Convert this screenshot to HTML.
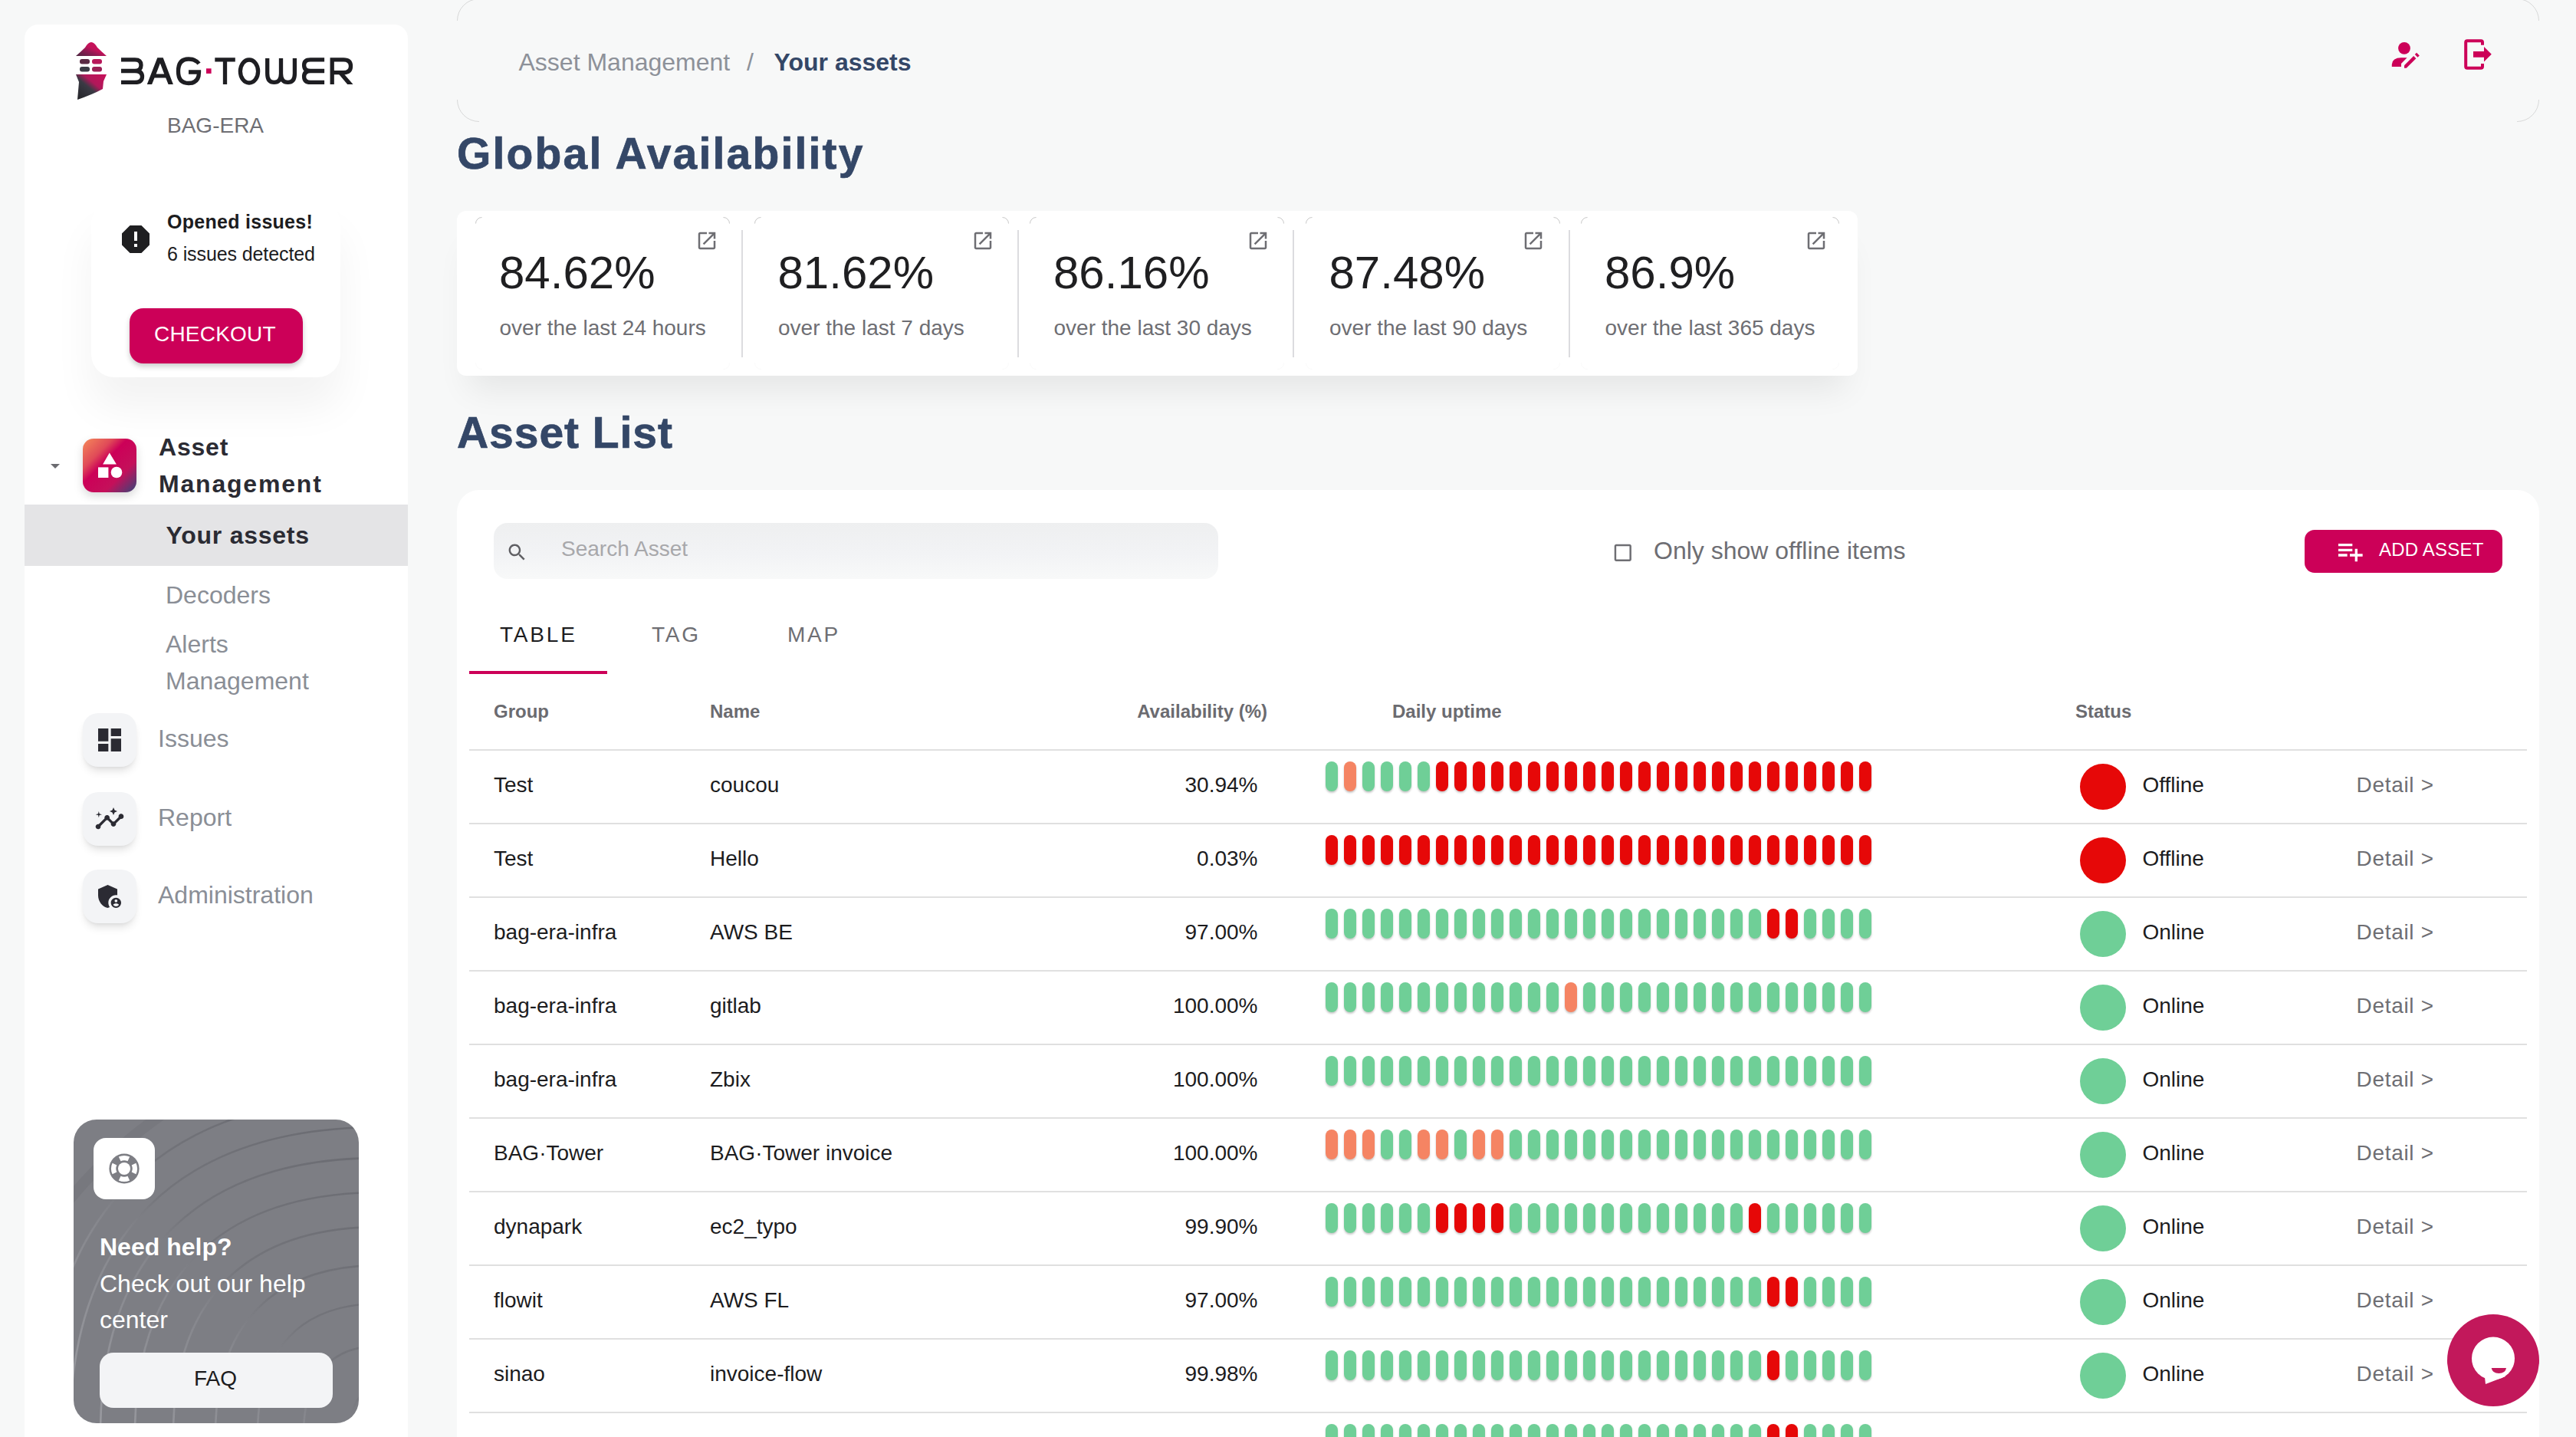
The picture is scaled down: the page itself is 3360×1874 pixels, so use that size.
<!DOCTYPE html><html><head><meta charset="utf-8"><style>
html,body{margin:0;padding:0;}
body{width:3360px;height:1874px;overflow:hidden;position:relative;background:#f7f8f8;font-family:"Liberation Sans", sans-serif;}
.t{position:absolute;white-space:nowrap;line-height:1;font-family:"Liberation Sans", sans-serif;}
@media (max-width: 2000px) { html { zoom: 0.5; } }
</style></head><body>
<div style="position:absolute;left:32px;top:32px;width:500px;height:1900px;background:#fff;border-radius:18px;"></div>
<svg style="position:absolute;left:96px;top:52px;" width="46" height="82" viewBox="0 0 46 82">
<defs><linearGradient id="tg" x1="0" y1="1" x2="1" y2="0"><stop offset="0" stop-color="#222226"/><stop offset="0.45" stop-color="#3a3a44"/><stop offset="0.62" stop-color="#b0185a"/><stop offset="1" stop-color="#c8105a"/></linearGradient>
<linearGradient id="rg" x1="0" y1="1" x2="1" y2="0"><stop offset="0" stop-color="#4a2840"/><stop offset="0.35" stop-color="#8e1a52"/><stop offset="0.55" stop-color="#c4125a"/><stop offset="1" stop-color="#c8105a"/></linearGradient></defs>
<path d="M3 21 Q 10 15 15 10 Q 19 3 23 3 Q 27 3 31 10 Q 36 15 43 21 Z" fill="url(#rg)"/>
<rect x="8" y="25" width="13" height="6.5" rx="3" fill="#5a2a44"/>
<rect x="24" y="25" width="13" height="6.5" rx="3" fill="#b8185a"/>
<rect x="8" y="35" width="13" height="6.5" rx="3" fill="#3a3a44"/>
<rect x="24" y="35" width="13" height="6.5" rx="3" fill="#9a1f55"/>
<path d="M3 45 L43 45 L39 54 L38 64 Q 25 71 5 78 L7 55 Z" fill="url(#tg)"/>
</svg>
<svg style="position:absolute;left:0px;top:0px;" width="480" height="130" viewBox="0 0 480 130">
<g fill="none" stroke="#1e1e22" stroke-width="5.3" stroke-linecap="butt" stroke-linejoin="miter">
<path d="M158 77.9 H176 Q 184 77.9 184 85 Q 184 92.5 176 92.5 H158 M176 92.5 Q 185.5 92.5 185.5 100 Q 185.5 107.4 176 107.4 H158"/>

<path d="M259.5 83 Q 255 77 246 77 Q 232.5 77 232.5 93 Q 232.5 108.5 246 108.5 Q 259.5 108.5 259.5 94 H246"/>
<path d="M280.3 77.9 H306.8 M293.5 77.9 V110"/>
<ellipse cx="325" cy="93" rx="11.6" ry="15"/>
<path d="M348.7 76 V96 Q 348.7 107.4 357.5 107.4 Q 366.5 107.4 366.5 96 V76 M366.5 96 Q 366.5 107.4 375.5 107.4 Q 384.4 107.4 384.4 96 V76"/>
<path d="M423.1 77.9 H405 Q 396.6 77.9 396.6 85 Q 396.6 92.5 405 92.5 H423.1 M405 92.5 Q 396.6 92.5 396.6 100 Q 396.6 107.4 405 107.4 H423.1"/>
<path d="M433.2 110 V77.9 H448 Q 457.5 77.9 457.5 86.3 Q 457.5 94.7 448 94.7 H433.2"/>
</g>
<rect x="269" y="89.3" width="6.6" height="6.6" fill="#cc0058"/>
<path fill-rule="evenodd" fill="#1e1e22" d="M191.8 110 L205.3 75.2 L212.7 75.2 L225.9 110 L219.6 110 L216.2 101.5 L201.5 101.5 L198.1 110 Z M203.6 96.4 L214.2 96.4 L208.9 82.5 Z"/>
<path fill="#1e1e22" d="M440.5 95 L447.5 95 L460.5 110 L453.2 110 Z"/>
</svg>
<div class="t" style="left:218.0px;top:150.3px;font-size:28px;font-weight:400;color:#6e6e73;letter-spacing:0px;">BAG-ERA</div>
<div style="position:absolute;left:119px;top:262px;width:325px;height:230px;background:#fff;border-radius:30px;box-shadow:0 40px 54px rgba(0,0,0,0.05);"></div>
<svg style="position:absolute;left:153px;top:288px;" width="48" height="48" viewBox="0 0 24 24"><path fill="#1f1f21" d="M15.73 3H8.27L3 8.27v7.46L8.27 21h7.46L21 15.73V8.27L15.73 3zM13 17h-2v-2h2v2zm0-4h-2V7h2v6z"/></svg>
<div class="t" style="left:218.0px;top:277.2px;font-size:25px;font-weight:700;color:#1c1c1e;letter-spacing:0.28px;">Opened issues!</div>
<div class="t" style="left:218.0px;top:318.8px;font-size:25px;font-weight:400;color:#1c1c1e;letter-spacing:-0.1px;">6 issues detected</div>
<div style="position:absolute;left:169px;top:402px;width:226px;height:72px;background:#cc0058;border-radius:18px;box-shadow:0 4px 7px rgba(0,0,0,0.2);"></div>
<div class="t" style="left:201.0px;top:421.8px;font-size:28px;font-weight:400;color:#ffffff;letter-spacing:0.2px;">CHECKOUT</div>
<svg style="position:absolute;left:64px;top:603px;" width="16" height="10" viewBox="0 0 16 10"><path d="M2 2 L14 2 L8 8 Z" fill="#6b6b70"/></svg>
<svg style="position:absolute;left:108px;top:572px;filter:drop-shadow(0 5px 6px rgba(0,0,0,0.15));" width="70" height="70" viewBox="0 0 70 70">
<defs><linearGradient id="ag" x1="0" y1="0" x2="1" y2="1"><stop offset="0" stop-color="#f58a5a"/><stop offset="0.28" stop-color="#e04a58"/><stop offset="0.42" stop-color="#cc0058"/><stop offset="0.7" stop-color="#c4105a"/><stop offset="1" stop-color="#34467a"/></linearGradient></defs>
<rect x="0" y="0" width="70" height="70" rx="14" fill="url(#ag)"/>
<path d="M34.8 18.6 L43.9 33.6 L26.1 33.6 Z" fill="#fff"/>
<rect x="20" y="37.4" width="13.4" height="13.6" fill="#fff"/>
<circle cx="44" cy="44" r="7.3" fill="#fff"/>
</svg>
<div class="t" style="left:207.0px;top:566.9px;font-size:32px;font-weight:700;color:#2b2b33;letter-spacing:0.8px;">Asset</div>
<div class="t" style="left:207.0px;top:614.9px;font-size:32px;font-weight:700;color:#2b2b33;letter-spacing:1.8px;">Management</div>
<div style="position:absolute;left:32px;top:658px;width:500px;height:80px;background:#e4e4e6;"></div>
<div class="t" style="left:216.5px;top:681.9px;font-size:32px;font-weight:700;color:#2b2b33;letter-spacing:0.75px;">Your assets</div>
<div class="t" style="left:216.0px;top:759.9px;font-size:32px;font-weight:400;color:#8a8e96;letter-spacing:0px;">Decoders</div>
<div class="t" style="left:216.0px;top:823.9px;font-size:32px;font-weight:400;color:#8a8e96;letter-spacing:0px;">Alerts</div>
<div class="t" style="left:216.0px;top:871.9px;font-size:32px;font-weight:400;color:#8a8e96;letter-spacing:0px;">Management</div>
<div style="position:absolute;left:108px;top:930px;width:70px;height:70px;background:#f3f4f6;border-radius:20px;box-shadow:0 8px 12px -3px rgba(0,0,0,0.12), 0 3px 5px -2px rgba(0,0,0,0.06);"></div>
<svg style="position:absolute;left:123px;top:945px;" width="40" height="40" viewBox="0 0 24 24"><path fill="#2b2b33" d="M3 13h8V3H3v10zm0 8h8v-6H3v6zm10 0h8V11h-8v10zm0-18v6h8V3h-8z"/></svg>
<div class="t" style="left:206.0px;top:946.9px;font-size:32px;font-weight:400;color:#8a8e96;letter-spacing:0px;">Issues</div>
<div style="position:absolute;left:108px;top:1033px;width:70px;height:70px;background:#f3f4f6;border-radius:20px;box-shadow:0 8px 12px -3px rgba(0,0,0,0.12), 0 3px 5px -2px rgba(0,0,0,0.06);"></div>
<svg style="position:absolute;left:123px;top:1048px;" width="40" height="40" viewBox="0 0 24 24"><path fill="#2b2b33" d="M21 8c-1.45 0-2.26 1.44-1.93 2.51l-3.55 3.56c-.3-.09-.74-.09-1.04 0l-2.55-2.55C12.27 10.45 11.46 9 10 9c-1.45 0-2.27 1.44-1.93 2.52l-4.56 4.55C2.44 15.74 1 16.55 1 18c0 1.1.9 2 2 2 1.45 0 2.26-1.44 1.93-2.51l4.55-4.56c.3.09.74.09 1.04 0l2.55 2.55C12.73 16.55 13.54 18 15 18c1.45 0 2.27-1.44 1.93-2.52l3.56-3.55c1.07.33 2.51-.48 2.51-1.93 0-1.1-.9-2-2-2zM15 9l.94-2.07L18 6l-2.06-.93L15 3l-.92 2.07L12 6l2.08.93zM3.5 11L4 9l2-.5L4 8l-.5-2L3 8l-2 .5L3 9z"/></svg>
<div class="t" style="left:206.0px;top:1049.9px;font-size:32px;font-weight:400;color:#8a8e96;letter-spacing:0px;">Report</div>
<div style="position:absolute;left:108px;top:1134px;width:70px;height:70px;background:#f3f4f6;border-radius:20px;box-shadow:0 8px 12px -3px rgba(0,0,0,0.12), 0 3px 5px -2px rgba(0,0,0,0.06);"></div>
<svg style="position:absolute;left:123px;top:1149px;" width="40" height="40" viewBox="0 0 24 24"><path fill="#2b2b33" d="M17 11c.34 0 .67.04 1 .09V6.27L10.5 3 3 6.27v4.91c0 4.54 3.2 8.79 7.5 9.82.55-.13 1.08-.32 1.6-.55-.69-.98-1.1-2.17-1.1-3.45 0-3.31 2.69-6 6-6zM17 13c-2.21 0-4 1.79-4 4s1.79 4 4 4 4-1.79 4-4-1.79-4-4-4zm0 1.38c.62 0 1.12.51 1.12 1.12s-.51 1.12-1.12 1.12-1.12-.51-1.12-1.12.5-1.12 1.12-1.12zm0 5.37c-.93 0-1.74-.46-2.24-1.17.05-.72 1.51-1.08 2.24-1.08s2.19.36 2.24 1.08c-.5.71-1.31 1.17-2.24 1.17z"/></svg>
<div class="t" style="left:206.0px;top:1150.9px;font-size:32px;font-weight:400;color:#8a8e96;letter-spacing:0px;">Administration</div>
<div style="position:absolute;left:96px;top:1460px;width:372px;height:396px;border-radius:30px;background:#7d7e84;overflow:hidden;"><svg width="372" height="396" style="position:absolute;left:0;top:0"><defs><linearGradient id="wg" gradientUnits="userSpaceOnUse" x1="372" y1="0" x2="0" y2="400"><stop offset="0" stop-color="#5a5b62"/><stop offset="0.45" stop-color="#6c6d73"/><stop offset="0.6" stop-color="#8d8e94"/><stop offset="1" stop-color="#b4b5ba"/></linearGradient></defs><path d="M-40 410 C -40 124.0, 114.0 -30, 400 -30" fill="none" stroke="url(#wg)" stroke-width="2.6" opacity="0.55"/><path d="M-5 410 C -5 150.0, 136.75 10, 400 10" fill="none" stroke="url(#wg)" stroke-width="2.6" opacity="0.55"/><path d="M35 410 C 35 176.0, 162.75 50, 400 50" fill="none" stroke="url(#wg)" stroke-width="2.6" opacity="0.55"/><path d="M80 410 C 80 205.25, 192.0 95, 400 95" fill="none" stroke="url(#wg)" stroke-width="2.6" opacity="0.55"/><path d="M130 410 C 130 234.5, 224.5 140, 400 140" fill="none" stroke="url(#wg)" stroke-width="2.6" opacity="0.55"/><path d="M185 410 C 185 267.0, 260.25 190, 400 190" fill="none" stroke="url(#wg)" stroke-width="2.6" opacity="0.55"/><path d="M240 410 C 240 299.5, 296.0 240, 400 240" fill="none" stroke="url(#wg)" stroke-width="2.6" opacity="0.55"/><path d="M300 410 C 300 335.25, 335.0 295, 400 295" fill="none" stroke="url(#wg)" stroke-width="2.6" opacity="0.55"/><path d="M360 410 C 360 371.0, 374.0 350, 400 350" fill="none" stroke="url(#wg)" stroke-width="2.6" opacity="0.55"/><path d="M-10 110 C 30 60, 70 25, 120 -10" fill="none" stroke="#6a6b71" stroke-width="14" opacity="0.3"/></svg></div>
<div style="position:absolute;left:122px;top:1484px;width:80px;height:80px;background:#fff;border-radius:16px;"></div>
<svg style="position:absolute;left:138.1px;top:1500px;" width="48" height="48" viewBox="0 0 48 48"><circle cx="24" cy="24" r="19.6" fill="#7d7e84"/><circle cx="24" cy="24" r="8" fill="#fff"/><path fill="#fff" d="M39.41 16.82 A17.0 17.0 0 0 1 39.41 31.18 L33.70 28.52 A10.7 10.7 0 0 0 33.70 19.48 Z M31.18 39.41 A17.0 17.0 0 0 1 16.82 39.41 L19.48 33.70 A10.7 10.7 0 0 0 28.52 33.70 Z M8.59 31.18 A17.0 17.0 0 0 1 8.59 16.82 L14.30 19.48 A10.7 10.7 0 0 0 14.30 28.52 Z M16.82 8.59 A17.0 17.0 0 0 1 31.18 8.59 L28.52 14.30 A10.7 10.7 0 0 0 19.48 14.30 Z"/></svg>
<div class="t" style="left:130.0px;top:1609.9px;font-size:32px;font-weight:700;color:#ffffff;letter-spacing:0px;">Need help?</div>
<div class="t" style="left:130.0px;top:1657.9px;font-size:32px;font-weight:400;color:#ffffff;letter-spacing:0px;">Check out our help</div>
<div class="t" style="left:130.0px;top:1705.4px;font-size:32px;font-weight:400;color:#ffffff;letter-spacing:0px;">center</div>
<div style="position:absolute;left:130px;top:1764px;width:304px;height:72px;background:#f3f4f6;border-radius:18px;"></div>
<div class="t" style="left:253.0px;top:1784.3px;font-size:28px;font-weight:400;color:#1c1c1e;letter-spacing:0px;">FAQ</div>
<svg style="position:absolute;left:596px;top:-2px;" width="2716" height="162" viewBox="0 0 2716 162"><g fill="none" stroke="rgba(0,0,0,0.13)" stroke-width="1"><path d="M0.5 29 A28.5 28.5 0 0 1 29 0.5"/><path d="M2687 0.5 A28.5 28.5 0 0 1 2715.5 29"/><path d="M0.5 132 A28.5 28.5 0 0 0 29 160.5"/><path d="M2687 160.5 A28.5 28.5 0 0 0 2715.5 132"/></g></svg>
<div class="t" style="left:676.5px;top:64.9px;font-size:32px;font-weight:400;color:#8d9199;letter-spacing:0px;">Asset Management</div>
<div class="t" style="left:974.0px;top:64.9px;font-size:32px;font-weight:400;color:#8d9199;letter-spacing:0px;">/</div>
<div class="t" style="left:1009.5px;top:64.9px;font-size:32px;font-weight:700;color:#344767;letter-spacing:0px;">Your assets</div>
<svg style="position:absolute;left:3115px;top:50px;" width="46" height="44" viewBox="0 0 46 44"><g fill="#cc0058"><circle cx="21" cy="12.8" r="7.9"/>
<path d="M4.8 36.9 L4.8 34 Q 5.5 25.3 17 25.3 L24.6 25.3 L17 32.9 L17 36.9 Z"/>
<path d="M21 38.8 L21 35.2 L33.2 23 L36.4 26.2 L23.8 38.8 Z"/>
<path d="M34.8 21 L37.1 18.7 L40.8 22.4 L38.5 24.7 Z"/></g></svg>
<svg style="position:absolute;left:3210px;top:48px;" width="46" height="46" viewBox="0 0 46 46"><g fill="#cc0058"><path d="M8.2 3.2 H26 Q30 3.2 30 7.2 V10.8 H26 V7.2 H8.2 V38.8 H26 V34.9 H30 V38.8 Q30 42.8 26 42.8 H8.2 Q4.2 42.8 4.2 38.8 V7.2 Q4.2 3.2 8.2 3.2 Z"/>
<path d="M16 19 H30 V13.1 L39.8 22.8 L30 32.6 V26.65 H16 Z"/></g></svg>
<div class="t" style="left:596.0px;top:172.2px;font-size:57px;font-weight:700;color:#344767;letter-spacing:2.2px;-webkit-text-stroke:0.7px #344767;">Global Availability</div>
<div style="position:absolute;left:596px;top:275px;width:1827px;height:215px;background:#fff;border-radius:12px;box-shadow:0 34px 40px -16px rgba(0,0,0,0.075);"></div>
<svg style="position:absolute;left:620px;top:283px;" width="332" height="199" viewBox="0 0 332 199"><g fill="none" stroke="rgba(0,0,0,0.22)" stroke-width="1"><path d="M0.5 8.5 A8 8 0 0 1 8.5 0.5"/><path d="M323.5 0.5 A8 8 0 0 1 331.5 8.5"/><path d="M0.5 190.5 A8 8 0 0 0 8.5 198.5" stroke="rgba(0,0,0,0.025)"/><path d="M323.5 198.5 A8 8 0 0 0 331.5 190.5" stroke="rgba(0,0,0,0.025)"/></g></svg>
<div class="t" style="left:651.0px;top:325.9px;font-size:60px;font-weight:400;color:#1f1f21;letter-spacing:0px;">84.62%</div>
<div class="t" style="left:651.5px;top:413.7px;font-size:28px;font-weight:400;color:#6e6e73;letter-spacing:0px;">over the last 24 hours</div>
<svg style="position:absolute;left:907.2px;top:299px;" width="30" height="30" viewBox="0 0 24 24"><path fill="#6e6e73" d="M19 19H5V5h7V3H5c-1.11 0-2 .9-2 2v14c0 1.1.89 2 2 2h14c1.1 0 2-.9 2-2v-7h-2v7zM14 3v2h3.590l-9.83 9.830 1.41 1.41L19 6.41V10h2V3h-7z"/></svg>
<div style="position:absolute;left:967px;top:300px;width:2px;height:166px;background:#dcdcdf;"></div>
<svg style="position:absolute;left:983.5px;top:283px;" width="332" height="199" viewBox="0 0 332 199"><g fill="none" stroke="rgba(0,0,0,0.22)" stroke-width="1"><path d="M0.5 8.5 A8 8 0 0 1 8.5 0.5"/><path d="M323.5 0.5 A8 8 0 0 1 331.5 8.5"/><path d="M0.5 190.5 A8 8 0 0 0 8.5 198.5" stroke="rgba(0,0,0,0.025)"/><path d="M323.5 198.5 A8 8 0 0 0 331.5 190.5" stroke="rgba(0,0,0,0.025)"/></g></svg>
<div class="t" style="left:1014.5px;top:325.9px;font-size:60px;font-weight:400;color:#1f1f21;letter-spacing:0px;">81.62%</div>
<div class="t" style="left:1015.0px;top:413.7px;font-size:28px;font-weight:400;color:#6e6e73;letter-spacing:0px;">over the last 7 days</div>
<svg style="position:absolute;left:1266.6px;top:299px;" width="30" height="30" viewBox="0 0 24 24"><path fill="#6e6e73" d="M19 19H5V5h7V3H5c-1.11 0-2 .9-2 2v14c0 1.1.89 2 2 2h14c1.1 0 2-.9 2-2v-7h-2v7zM14 3v2h3.590l-9.83 9.830 1.41 1.41L19 6.41V10h2V3h-7z"/></svg>
<div style="position:absolute;left:1326.7px;top:300px;width:2px;height:166px;background:#dcdcdf;"></div>
<svg style="position:absolute;left:1343px;top:283px;" width="332" height="199" viewBox="0 0 332 199"><g fill="none" stroke="rgba(0,0,0,0.22)" stroke-width="1"><path d="M0.5 8.5 A8 8 0 0 1 8.5 0.5"/><path d="M323.5 0.5 A8 8 0 0 1 331.5 8.5"/><path d="M0.5 190.5 A8 8 0 0 0 8.5 198.5" stroke="rgba(0,0,0,0.025)"/><path d="M323.5 198.5 A8 8 0 0 0 331.5 190.5" stroke="rgba(0,0,0,0.025)"/></g></svg>
<div class="t" style="left:1374.0px;top:325.9px;font-size:60px;font-weight:400;color:#1f1f21;letter-spacing:0px;">86.16%</div>
<div class="t" style="left:1374.5px;top:413.7px;font-size:28px;font-weight:400;color:#6e6e73;letter-spacing:0px;">over the last 30 days</div>
<svg style="position:absolute;left:1625.8px;top:299px;" width="30" height="30" viewBox="0 0 24 24"><path fill="#6e6e73" d="M19 19H5V5h7V3H5c-1.11 0-2 .9-2 2v14c0 1.1.89 2 2 2h14c1.1 0 2-.9 2-2v-7h-2v7zM14 3v2h3.590l-9.83 9.830 1.41 1.41L19 6.41V10h2V3h-7z"/></svg>
<div style="position:absolute;left:1686.3px;top:300px;width:2px;height:166px;background:#dcdcdf;"></div>
<svg style="position:absolute;left:1702.5px;top:283px;" width="332" height="199" viewBox="0 0 332 199"><g fill="none" stroke="rgba(0,0,0,0.22)" stroke-width="1"><path d="M0.5 8.5 A8 8 0 0 1 8.5 0.5"/><path d="M323.5 0.5 A8 8 0 0 1 331.5 8.5"/><path d="M0.5 190.5 A8 8 0 0 0 8.5 198.5" stroke="rgba(0,0,0,0.025)"/><path d="M323.5 198.5 A8 8 0 0 0 331.5 190.5" stroke="rgba(0,0,0,0.025)"/></g></svg>
<div class="t" style="left:1733.5px;top:325.9px;font-size:60px;font-weight:400;color:#1f1f21;letter-spacing:0px;">87.48%</div>
<div class="t" style="left:1734.0px;top:413.7px;font-size:28px;font-weight:400;color:#6e6e73;letter-spacing:0px;">over the last 90 days</div>
<svg style="position:absolute;left:1985px;top:299px;" width="30" height="30" viewBox="0 0 24 24"><path fill="#6e6e73" d="M19 19H5V5h7V3H5c-1.11 0-2 .9-2 2v14c0 1.1.89 2 2 2h14c1.1 0 2-.9 2-2v-7h-2v7zM14 3v2h3.590l-9.83 9.830 1.41 1.41L19 6.41V10h2V3h-7z"/></svg>
<div style="position:absolute;left:2046px;top:300px;width:2px;height:166px;background:#dcdcdf;"></div>
<svg style="position:absolute;left:2062px;top:283px;" width="337" height="199" viewBox="0 0 337 199"><g fill="none" stroke="rgba(0,0,0,0.22)" stroke-width="1"><path d="M0.5 8.5 A8 8 0 0 1 8.5 0.5"/><path d="M328.5 0.5 A8 8 0 0 1 336.5 8.5"/><path d="M0.5 190.5 A8 8 0 0 0 8.5 198.5" stroke="rgba(0,0,0,0.025)"/><path d="M328.5 198.5 A8 8 0 0 0 336.5 190.5" stroke="rgba(0,0,0,0.025)"/></g></svg>
<div class="t" style="left:2093.0px;top:325.9px;font-size:60px;font-weight:400;color:#1f1f21;letter-spacing:0px;">86.9%</div>
<div class="t" style="left:2093.5px;top:413.7px;font-size:28px;font-weight:400;color:#6e6e73;letter-spacing:0px;">over the last 365 days</div>
<svg style="position:absolute;left:2353.5px;top:299px;" width="30" height="30" viewBox="0 0 24 24"><path fill="#6e6e73" d="M19 19H5V5h7V3H5c-1.11 0-2 .9-2 2v14c0 1.1.89 2 2 2h14c1.1 0 2-.9 2-2v-7h-2v7zM14 3v2h3.590l-9.83 9.830 1.41 1.41L19 6.41V10h2V3h-7z"/></svg>
<div class="t" style="left:596.0px;top:536.2px;font-size:57px;font-weight:700;color:#344767;letter-spacing:0.95px;-webkit-text-stroke:0.7px #344767;">Asset List</div>
<div style="position:absolute;left:596px;top:639px;width:2716px;height:1400px;background:#fff;border-radius:29px;"></div>
<div style="position:absolute;left:644px;top:682px;width:945px;height:73px;background:linear-gradient(#eeeff0,#f2f3f5 55%,#f8f9f9);border-radius:18px;"></div>
<svg style="position:absolute;left:660.4px;top:706.4px;" width="28.8" height="28.8" viewBox="0 0 24 24"><path fill="#5f5f63" d="M15.5 14h-.79l-.28-.27C15.41 12.59 16 11.11 16 9.5 16 5.91 13.090 3 9.5 3S3 5.910 3 9.5 5.910 16 9.5 16c1.610 0 3.090-.59 4.230-1.57l.27.28v.79l5 4.990L20.49 19l-4.990-5zm-6 0C7.010 14 5 11.99 5 9.5S7.010 5 9.5 5 14 7.010 14 9.5 11.990 14 9.5 14z"/></svg>
<div class="t" style="left:732.0px;top:702.3px;font-size:28px;font-weight:400;color:#a8a8ab;letter-spacing:0px;">Search Asset</div>
<svg style="position:absolute;left:2102.3px;top:705.6px;" width="29.6" height="29.6" viewBox="0 0 24 24"><path fill="#6e6e73" d="M19 5v14H5V5h14m0-2H5c-1.1 0-2 .9-2 2v14c0 1.1.9 2 2 2h14c1.1 0 2-.9 2-2V5c0-1.1-.9-2-2-2z"/></svg>
<div class="t" style="left:2157.0px;top:702.2px;font-size:32px;font-weight:400;color:#6e6e73;letter-spacing:0px;">Only show offline items</div>
<div style="position:absolute;left:3006px;top:691px;width:258px;height:56px;background:#cc0058;border-radius:13px;"></div>
<svg style="position:absolute;left:3045px;top:699px;" width="40" height="40" viewBox="0 0 24 24"><path fill="#fff" d="M14 10H3v2h11v-2zm0-4H3v2h11V6zm4 8v-4h-2v4h-4v2h4v4h2v-4h4v-2h-4zM3 16h7v-2H3v2z"/></svg>
<div class="t" style="left:3103.0px;top:704.7px;font-size:24px;font-weight:400;color:#ffffff;letter-spacing:0.2px;">ADD ASSET</div>
<div class="t" style="left:652.0px;top:814.3px;font-size:28px;font-weight:400;color:#1c1c1e;letter-spacing:2.8px;">TABLE</div>
<div class="t" style="left:850.0px;top:814.3px;font-size:28px;font-weight:400;color:#6e6e73;letter-spacing:2.8px;">TAG</div>
<div class="t" style="left:1027.0px;top:814.3px;font-size:28px;font-weight:400;color:#6e6e73;letter-spacing:2.8px;">MAP</div>
<div style="position:absolute;left:612px;top:875px;width:180px;height:4px;background:#cc0058;"></div>
<div class="t" style="left:644.0px;top:916.3px;font-size:24px;font-weight:700;color:#6b6b70;letter-spacing:0px;">Group</div>
<div class="t" style="left:926.0px;top:916.3px;font-size:24px;font-weight:700;color:#6b6b70;letter-spacing:0px;">Name</div>
<div class="t" style="right:1707.0px;top:916.3px;font-size:24px;font-weight:700;color:#6b6b70;letter-spacing:0px;">Availability (%)</div>
<div class="t" style="left:1816.0px;top:916.3px;font-size:24px;font-weight:700;color:#6b6b70;letter-spacing:0px;">Daily uptime</div>
<div class="t" style="left:2707.0px;top:916.3px;font-size:24px;font-weight:700;color:#6b6b70;letter-spacing:0px;">Status</div>
<div style="position:absolute;left:612px;top:977px;width:2684px;height:2px;background:#e0e0e0;"></div>
<div class="t" style="left:644.0px;top:1009.6px;font-size:28px;font-weight:400;color:#1c1c1e;letter-spacing:0px;">Test</div>
<div class="t" style="left:926.0px;top:1009.6px;font-size:28px;font-weight:400;color:#1c1c1e;letter-spacing:0px;">coucou</div>
<div class="t" style="right:1719.5px;top:1009.6px;font-size:28px;font-weight:400;color:#1c1c1e;letter-spacing:0px;">30.94%</div>
<div style="position:absolute;left:1729px;top:993px;width:720px;height:42px;"><div style="position:absolute;left:0px;top:0;width:16px;height:39px;border-radius:8px;background:#6fcf97;box-shadow:0 2px 2.5px rgba(0,0,0,0.22);"></div><div style="position:absolute;left:24px;top:0;width:16px;height:39px;border-radius:8px;background:#f58463;box-shadow:0 2px 2.5px rgba(0,0,0,0.22);"></div><div style="position:absolute;left:48px;top:0;width:16px;height:39px;border-radius:8px;background:#6fcf97;box-shadow:0 2px 2.5px rgba(0,0,0,0.22);"></div><div style="position:absolute;left:72px;top:0;width:16px;height:39px;border-radius:8px;background:#6fcf97;box-shadow:0 2px 2.5px rgba(0,0,0,0.22);"></div><div style="position:absolute;left:96px;top:0;width:16px;height:39px;border-radius:8px;background:#6fcf97;box-shadow:0 2px 2.5px rgba(0,0,0,0.22);"></div><div style="position:absolute;left:120px;top:0;width:16px;height:39px;border-radius:8px;background:#6fcf97;box-shadow:0 2px 2.5px rgba(0,0,0,0.22);"></div><div style="position:absolute;left:144px;top:0;width:16px;height:39px;border-radius:8px;background:#e60808;box-shadow:0 2px 2.5px rgba(0,0,0,0.22);"></div><div style="position:absolute;left:168px;top:0;width:16px;height:39px;border-radius:8px;background:#e60808;box-shadow:0 2px 2.5px rgba(0,0,0,0.22);"></div><div style="position:absolute;left:192px;top:0;width:16px;height:39px;border-radius:8px;background:#e60808;box-shadow:0 2px 2.5px rgba(0,0,0,0.22);"></div><div style="position:absolute;left:216px;top:0;width:16px;height:39px;border-radius:8px;background:#e60808;box-shadow:0 2px 2.5px rgba(0,0,0,0.22);"></div><div style="position:absolute;left:240px;top:0;width:16px;height:39px;border-radius:8px;background:#e60808;box-shadow:0 2px 2.5px rgba(0,0,0,0.22);"></div><div style="position:absolute;left:264px;top:0;width:16px;height:39px;border-radius:8px;background:#e60808;box-shadow:0 2px 2.5px rgba(0,0,0,0.22);"></div><div style="position:absolute;left:288px;top:0;width:16px;height:39px;border-radius:8px;background:#e60808;box-shadow:0 2px 2.5px rgba(0,0,0,0.22);"></div><div style="position:absolute;left:312px;top:0;width:16px;height:39px;border-radius:8px;background:#e60808;box-shadow:0 2px 2.5px rgba(0,0,0,0.22);"></div><div style="position:absolute;left:336px;top:0;width:16px;height:39px;border-radius:8px;background:#e60808;box-shadow:0 2px 2.5px rgba(0,0,0,0.22);"></div><div style="position:absolute;left:360px;top:0;width:16px;height:39px;border-radius:8px;background:#e60808;box-shadow:0 2px 2.5px rgba(0,0,0,0.22);"></div><div style="position:absolute;left:384px;top:0;width:16px;height:39px;border-radius:8px;background:#e60808;box-shadow:0 2px 2.5px rgba(0,0,0,0.22);"></div><div style="position:absolute;left:408px;top:0;width:16px;height:39px;border-radius:8px;background:#e60808;box-shadow:0 2px 2.5px rgba(0,0,0,0.22);"></div><div style="position:absolute;left:432px;top:0;width:16px;height:39px;border-radius:8px;background:#e60808;box-shadow:0 2px 2.5px rgba(0,0,0,0.22);"></div><div style="position:absolute;left:456px;top:0;width:16px;height:39px;border-radius:8px;background:#e60808;box-shadow:0 2px 2.5px rgba(0,0,0,0.22);"></div><div style="position:absolute;left:480px;top:0;width:16px;height:39px;border-radius:8px;background:#e60808;box-shadow:0 2px 2.5px rgba(0,0,0,0.22);"></div><div style="position:absolute;left:504px;top:0;width:16px;height:39px;border-radius:8px;background:#e60808;box-shadow:0 2px 2.5px rgba(0,0,0,0.22);"></div><div style="position:absolute;left:528px;top:0;width:16px;height:39px;border-radius:8px;background:#e60808;box-shadow:0 2px 2.5px rgba(0,0,0,0.22);"></div><div style="position:absolute;left:552px;top:0;width:16px;height:39px;border-radius:8px;background:#e60808;box-shadow:0 2px 2.5px rgba(0,0,0,0.22);"></div><div style="position:absolute;left:576px;top:0;width:16px;height:39px;border-radius:8px;background:#e60808;box-shadow:0 2px 2.5px rgba(0,0,0,0.22);"></div><div style="position:absolute;left:600px;top:0;width:16px;height:39px;border-radius:8px;background:#e60808;box-shadow:0 2px 2.5px rgba(0,0,0,0.22);"></div><div style="position:absolute;left:624px;top:0;width:16px;height:39px;border-radius:8px;background:#e60808;box-shadow:0 2px 2.5px rgba(0,0,0,0.22);"></div><div style="position:absolute;left:648px;top:0;width:16px;height:39px;border-radius:8px;background:#e60808;box-shadow:0 2px 2.5px rgba(0,0,0,0.22);"></div><div style="position:absolute;left:672px;top:0;width:16px;height:39px;border-radius:8px;background:#e60808;box-shadow:0 2px 2.5px rgba(0,0,0,0.22);"></div><div style="position:absolute;left:696px;top:0;width:16px;height:39px;border-radius:8px;background:#e60808;box-shadow:0 2px 2.5px rgba(0,0,0,0.22);"></div></div>
<div style="position:absolute;left:2713px;top:996px;width:60px;height:60px;background:#e60808;border-radius:50%;"></div>
<div class="t" style="left:2794.5px;top:1009.6px;font-size:28px;font-weight:400;color:#1c1c1e;letter-spacing:0px;">Offline</div>
<div class="t" style="left:3073.5px;top:1009.6px;font-size:28px;font-weight:400;color:#6e6e73;letter-spacing:0.7px;">Detail &gt;</div>
<div style="position:absolute;left:612px;top:1073px;width:2684px;height:2px;background:#e0e0e0;"></div>
<div class="t" style="left:644.0px;top:1105.6px;font-size:28px;font-weight:400;color:#1c1c1e;letter-spacing:0px;">Test</div>
<div class="t" style="left:926.0px;top:1105.6px;font-size:28px;font-weight:400;color:#1c1c1e;letter-spacing:0px;">Hello</div>
<div class="t" style="right:1719.5px;top:1105.6px;font-size:28px;font-weight:400;color:#1c1c1e;letter-spacing:0px;">0.03%</div>
<div style="position:absolute;left:1729px;top:1089px;width:720px;height:42px;"><div style="position:absolute;left:0px;top:0;width:16px;height:39px;border-radius:8px;background:#e60808;box-shadow:0 2px 2.5px rgba(0,0,0,0.22);"></div><div style="position:absolute;left:24px;top:0;width:16px;height:39px;border-radius:8px;background:#e60808;box-shadow:0 2px 2.5px rgba(0,0,0,0.22);"></div><div style="position:absolute;left:48px;top:0;width:16px;height:39px;border-radius:8px;background:#e60808;box-shadow:0 2px 2.5px rgba(0,0,0,0.22);"></div><div style="position:absolute;left:72px;top:0;width:16px;height:39px;border-radius:8px;background:#e60808;box-shadow:0 2px 2.5px rgba(0,0,0,0.22);"></div><div style="position:absolute;left:96px;top:0;width:16px;height:39px;border-radius:8px;background:#e60808;box-shadow:0 2px 2.5px rgba(0,0,0,0.22);"></div><div style="position:absolute;left:120px;top:0;width:16px;height:39px;border-radius:8px;background:#e60808;box-shadow:0 2px 2.5px rgba(0,0,0,0.22);"></div><div style="position:absolute;left:144px;top:0;width:16px;height:39px;border-radius:8px;background:#e60808;box-shadow:0 2px 2.5px rgba(0,0,0,0.22);"></div><div style="position:absolute;left:168px;top:0;width:16px;height:39px;border-radius:8px;background:#e60808;box-shadow:0 2px 2.5px rgba(0,0,0,0.22);"></div><div style="position:absolute;left:192px;top:0;width:16px;height:39px;border-radius:8px;background:#e60808;box-shadow:0 2px 2.5px rgba(0,0,0,0.22);"></div><div style="position:absolute;left:216px;top:0;width:16px;height:39px;border-radius:8px;background:#e60808;box-shadow:0 2px 2.5px rgba(0,0,0,0.22);"></div><div style="position:absolute;left:240px;top:0;width:16px;height:39px;border-radius:8px;background:#e60808;box-shadow:0 2px 2.5px rgba(0,0,0,0.22);"></div><div style="position:absolute;left:264px;top:0;width:16px;height:39px;border-radius:8px;background:#e60808;box-shadow:0 2px 2.5px rgba(0,0,0,0.22);"></div><div style="position:absolute;left:288px;top:0;width:16px;height:39px;border-radius:8px;background:#e60808;box-shadow:0 2px 2.5px rgba(0,0,0,0.22);"></div><div style="position:absolute;left:312px;top:0;width:16px;height:39px;border-radius:8px;background:#e60808;box-shadow:0 2px 2.5px rgba(0,0,0,0.22);"></div><div style="position:absolute;left:336px;top:0;width:16px;height:39px;border-radius:8px;background:#e60808;box-shadow:0 2px 2.5px rgba(0,0,0,0.22);"></div><div style="position:absolute;left:360px;top:0;width:16px;height:39px;border-radius:8px;background:#e60808;box-shadow:0 2px 2.5px rgba(0,0,0,0.22);"></div><div style="position:absolute;left:384px;top:0;width:16px;height:39px;border-radius:8px;background:#e60808;box-shadow:0 2px 2.5px rgba(0,0,0,0.22);"></div><div style="position:absolute;left:408px;top:0;width:16px;height:39px;border-radius:8px;background:#e60808;box-shadow:0 2px 2.5px rgba(0,0,0,0.22);"></div><div style="position:absolute;left:432px;top:0;width:16px;height:39px;border-radius:8px;background:#e60808;box-shadow:0 2px 2.5px rgba(0,0,0,0.22);"></div><div style="position:absolute;left:456px;top:0;width:16px;height:39px;border-radius:8px;background:#e60808;box-shadow:0 2px 2.5px rgba(0,0,0,0.22);"></div><div style="position:absolute;left:480px;top:0;width:16px;height:39px;border-radius:8px;background:#e60808;box-shadow:0 2px 2.5px rgba(0,0,0,0.22);"></div><div style="position:absolute;left:504px;top:0;width:16px;height:39px;border-radius:8px;background:#e60808;box-shadow:0 2px 2.5px rgba(0,0,0,0.22);"></div><div style="position:absolute;left:528px;top:0;width:16px;height:39px;border-radius:8px;background:#e60808;box-shadow:0 2px 2.5px rgba(0,0,0,0.22);"></div><div style="position:absolute;left:552px;top:0;width:16px;height:39px;border-radius:8px;background:#e60808;box-shadow:0 2px 2.5px rgba(0,0,0,0.22);"></div><div style="position:absolute;left:576px;top:0;width:16px;height:39px;border-radius:8px;background:#e60808;box-shadow:0 2px 2.5px rgba(0,0,0,0.22);"></div><div style="position:absolute;left:600px;top:0;width:16px;height:39px;border-radius:8px;background:#e60808;box-shadow:0 2px 2.5px rgba(0,0,0,0.22);"></div><div style="position:absolute;left:624px;top:0;width:16px;height:39px;border-radius:8px;background:#e60808;box-shadow:0 2px 2.5px rgba(0,0,0,0.22);"></div><div style="position:absolute;left:648px;top:0;width:16px;height:39px;border-radius:8px;background:#e60808;box-shadow:0 2px 2.5px rgba(0,0,0,0.22);"></div><div style="position:absolute;left:672px;top:0;width:16px;height:39px;border-radius:8px;background:#e60808;box-shadow:0 2px 2.5px rgba(0,0,0,0.22);"></div><div style="position:absolute;left:696px;top:0;width:16px;height:39px;border-radius:8px;background:#e60808;box-shadow:0 2px 2.5px rgba(0,0,0,0.22);"></div></div>
<div style="position:absolute;left:2713px;top:1092px;width:60px;height:60px;background:#e60808;border-radius:50%;"></div>
<div class="t" style="left:2794.5px;top:1105.6px;font-size:28px;font-weight:400;color:#1c1c1e;letter-spacing:0px;">Offline</div>
<div class="t" style="left:3073.5px;top:1105.6px;font-size:28px;font-weight:400;color:#6e6e73;letter-spacing:0.7px;">Detail &gt;</div>
<div style="position:absolute;left:612px;top:1169px;width:2684px;height:2px;background:#e0e0e0;"></div>
<div class="t" style="left:644.0px;top:1201.6px;font-size:28px;font-weight:400;color:#1c1c1e;letter-spacing:0px;">bag-era-infra</div>
<div class="t" style="left:926.0px;top:1201.6px;font-size:28px;font-weight:400;color:#1c1c1e;letter-spacing:0px;">AWS BE</div>
<div class="t" style="right:1719.5px;top:1201.6px;font-size:28px;font-weight:400;color:#1c1c1e;letter-spacing:0px;">97.00%</div>
<div style="position:absolute;left:1729px;top:1185px;width:720px;height:42px;"><div style="position:absolute;left:0px;top:0;width:16px;height:39px;border-radius:8px;background:#6fcf97;box-shadow:0 2px 2.5px rgba(0,0,0,0.22);"></div><div style="position:absolute;left:24px;top:0;width:16px;height:39px;border-radius:8px;background:#6fcf97;box-shadow:0 2px 2.5px rgba(0,0,0,0.22);"></div><div style="position:absolute;left:48px;top:0;width:16px;height:39px;border-radius:8px;background:#6fcf97;box-shadow:0 2px 2.5px rgba(0,0,0,0.22);"></div><div style="position:absolute;left:72px;top:0;width:16px;height:39px;border-radius:8px;background:#6fcf97;box-shadow:0 2px 2.5px rgba(0,0,0,0.22);"></div><div style="position:absolute;left:96px;top:0;width:16px;height:39px;border-radius:8px;background:#6fcf97;box-shadow:0 2px 2.5px rgba(0,0,0,0.22);"></div><div style="position:absolute;left:120px;top:0;width:16px;height:39px;border-radius:8px;background:#6fcf97;box-shadow:0 2px 2.5px rgba(0,0,0,0.22);"></div><div style="position:absolute;left:144px;top:0;width:16px;height:39px;border-radius:8px;background:#6fcf97;box-shadow:0 2px 2.5px rgba(0,0,0,0.22);"></div><div style="position:absolute;left:168px;top:0;width:16px;height:39px;border-radius:8px;background:#6fcf97;box-shadow:0 2px 2.5px rgba(0,0,0,0.22);"></div><div style="position:absolute;left:192px;top:0;width:16px;height:39px;border-radius:8px;background:#6fcf97;box-shadow:0 2px 2.5px rgba(0,0,0,0.22);"></div><div style="position:absolute;left:216px;top:0;width:16px;height:39px;border-radius:8px;background:#6fcf97;box-shadow:0 2px 2.5px rgba(0,0,0,0.22);"></div><div style="position:absolute;left:240px;top:0;width:16px;height:39px;border-radius:8px;background:#6fcf97;box-shadow:0 2px 2.5px rgba(0,0,0,0.22);"></div><div style="position:absolute;left:264px;top:0;width:16px;height:39px;border-radius:8px;background:#6fcf97;box-shadow:0 2px 2.5px rgba(0,0,0,0.22);"></div><div style="position:absolute;left:288px;top:0;width:16px;height:39px;border-radius:8px;background:#6fcf97;box-shadow:0 2px 2.5px rgba(0,0,0,0.22);"></div><div style="position:absolute;left:312px;top:0;width:16px;height:39px;border-radius:8px;background:#6fcf97;box-shadow:0 2px 2.5px rgba(0,0,0,0.22);"></div><div style="position:absolute;left:336px;top:0;width:16px;height:39px;border-radius:8px;background:#6fcf97;box-shadow:0 2px 2.5px rgba(0,0,0,0.22);"></div><div style="position:absolute;left:360px;top:0;width:16px;height:39px;border-radius:8px;background:#6fcf97;box-shadow:0 2px 2.5px rgba(0,0,0,0.22);"></div><div style="position:absolute;left:384px;top:0;width:16px;height:39px;border-radius:8px;background:#6fcf97;box-shadow:0 2px 2.5px rgba(0,0,0,0.22);"></div><div style="position:absolute;left:408px;top:0;width:16px;height:39px;border-radius:8px;background:#6fcf97;box-shadow:0 2px 2.5px rgba(0,0,0,0.22);"></div><div style="position:absolute;left:432px;top:0;width:16px;height:39px;border-radius:8px;background:#6fcf97;box-shadow:0 2px 2.5px rgba(0,0,0,0.22);"></div><div style="position:absolute;left:456px;top:0;width:16px;height:39px;border-radius:8px;background:#6fcf97;box-shadow:0 2px 2.5px rgba(0,0,0,0.22);"></div><div style="position:absolute;left:480px;top:0;width:16px;height:39px;border-radius:8px;background:#6fcf97;box-shadow:0 2px 2.5px rgba(0,0,0,0.22);"></div><div style="position:absolute;left:504px;top:0;width:16px;height:39px;border-radius:8px;background:#6fcf97;box-shadow:0 2px 2.5px rgba(0,0,0,0.22);"></div><div style="position:absolute;left:528px;top:0;width:16px;height:39px;border-radius:8px;background:#6fcf97;box-shadow:0 2px 2.5px rgba(0,0,0,0.22);"></div><div style="position:absolute;left:552px;top:0;width:16px;height:39px;border-radius:8px;background:#6fcf97;box-shadow:0 2px 2.5px rgba(0,0,0,0.22);"></div><div style="position:absolute;left:576px;top:0;width:16px;height:39px;border-radius:8px;background:#e60808;box-shadow:0 2px 2.5px rgba(0,0,0,0.22);"></div><div style="position:absolute;left:600px;top:0;width:16px;height:39px;border-radius:8px;background:#e60808;box-shadow:0 2px 2.5px rgba(0,0,0,0.22);"></div><div style="position:absolute;left:624px;top:0;width:16px;height:39px;border-radius:8px;background:#6fcf97;box-shadow:0 2px 2.5px rgba(0,0,0,0.22);"></div><div style="position:absolute;left:648px;top:0;width:16px;height:39px;border-radius:8px;background:#6fcf97;box-shadow:0 2px 2.5px rgba(0,0,0,0.22);"></div><div style="position:absolute;left:672px;top:0;width:16px;height:39px;border-radius:8px;background:#6fcf97;box-shadow:0 2px 2.5px rgba(0,0,0,0.22);"></div><div style="position:absolute;left:696px;top:0;width:16px;height:39px;border-radius:8px;background:#6fcf97;box-shadow:0 2px 2.5px rgba(0,0,0,0.22);"></div></div>
<div style="position:absolute;left:2713px;top:1188px;width:60px;height:60px;background:#6fcf97;border-radius:50%;"></div>
<div class="t" style="left:2794.5px;top:1201.6px;font-size:28px;font-weight:400;color:#1c1c1e;letter-spacing:0px;">Online</div>
<div class="t" style="left:3073.5px;top:1201.6px;font-size:28px;font-weight:400;color:#6e6e73;letter-spacing:0.7px;">Detail &gt;</div>
<div style="position:absolute;left:612px;top:1265px;width:2684px;height:2px;background:#e0e0e0;"></div>
<div class="t" style="left:644.0px;top:1297.6px;font-size:28px;font-weight:400;color:#1c1c1e;letter-spacing:0px;">bag-era-infra</div>
<div class="t" style="left:926.0px;top:1297.6px;font-size:28px;font-weight:400;color:#1c1c1e;letter-spacing:0px;">gitlab</div>
<div class="t" style="right:1719.5px;top:1297.6px;font-size:28px;font-weight:400;color:#1c1c1e;letter-spacing:0px;">100.00%</div>
<div style="position:absolute;left:1729px;top:1281px;width:720px;height:42px;"><div style="position:absolute;left:0px;top:0;width:16px;height:39px;border-radius:8px;background:#6fcf97;box-shadow:0 2px 2.5px rgba(0,0,0,0.22);"></div><div style="position:absolute;left:24px;top:0;width:16px;height:39px;border-radius:8px;background:#6fcf97;box-shadow:0 2px 2.5px rgba(0,0,0,0.22);"></div><div style="position:absolute;left:48px;top:0;width:16px;height:39px;border-radius:8px;background:#6fcf97;box-shadow:0 2px 2.5px rgba(0,0,0,0.22);"></div><div style="position:absolute;left:72px;top:0;width:16px;height:39px;border-radius:8px;background:#6fcf97;box-shadow:0 2px 2.5px rgba(0,0,0,0.22);"></div><div style="position:absolute;left:96px;top:0;width:16px;height:39px;border-radius:8px;background:#6fcf97;box-shadow:0 2px 2.5px rgba(0,0,0,0.22);"></div><div style="position:absolute;left:120px;top:0;width:16px;height:39px;border-radius:8px;background:#6fcf97;box-shadow:0 2px 2.5px rgba(0,0,0,0.22);"></div><div style="position:absolute;left:144px;top:0;width:16px;height:39px;border-radius:8px;background:#6fcf97;box-shadow:0 2px 2.5px rgba(0,0,0,0.22);"></div><div style="position:absolute;left:168px;top:0;width:16px;height:39px;border-radius:8px;background:#6fcf97;box-shadow:0 2px 2.5px rgba(0,0,0,0.22);"></div><div style="position:absolute;left:192px;top:0;width:16px;height:39px;border-radius:8px;background:#6fcf97;box-shadow:0 2px 2.5px rgba(0,0,0,0.22);"></div><div style="position:absolute;left:216px;top:0;width:16px;height:39px;border-radius:8px;background:#6fcf97;box-shadow:0 2px 2.5px rgba(0,0,0,0.22);"></div><div style="position:absolute;left:240px;top:0;width:16px;height:39px;border-radius:8px;background:#6fcf97;box-shadow:0 2px 2.5px rgba(0,0,0,0.22);"></div><div style="position:absolute;left:264px;top:0;width:16px;height:39px;border-radius:8px;background:#6fcf97;box-shadow:0 2px 2.5px rgba(0,0,0,0.22);"></div><div style="position:absolute;left:288px;top:0;width:16px;height:39px;border-radius:8px;background:#6fcf97;box-shadow:0 2px 2.5px rgba(0,0,0,0.22);"></div><div style="position:absolute;left:312px;top:0;width:16px;height:39px;border-radius:8px;background:#f58463;box-shadow:0 2px 2.5px rgba(0,0,0,0.22);"></div><div style="position:absolute;left:336px;top:0;width:16px;height:39px;border-radius:8px;background:#6fcf97;box-shadow:0 2px 2.5px rgba(0,0,0,0.22);"></div><div style="position:absolute;left:360px;top:0;width:16px;height:39px;border-radius:8px;background:#6fcf97;box-shadow:0 2px 2.5px rgba(0,0,0,0.22);"></div><div style="position:absolute;left:384px;top:0;width:16px;height:39px;border-radius:8px;background:#6fcf97;box-shadow:0 2px 2.5px rgba(0,0,0,0.22);"></div><div style="position:absolute;left:408px;top:0;width:16px;height:39px;border-radius:8px;background:#6fcf97;box-shadow:0 2px 2.5px rgba(0,0,0,0.22);"></div><div style="position:absolute;left:432px;top:0;width:16px;height:39px;border-radius:8px;background:#6fcf97;box-shadow:0 2px 2.5px rgba(0,0,0,0.22);"></div><div style="position:absolute;left:456px;top:0;width:16px;height:39px;border-radius:8px;background:#6fcf97;box-shadow:0 2px 2.5px rgba(0,0,0,0.22);"></div><div style="position:absolute;left:480px;top:0;width:16px;height:39px;border-radius:8px;background:#6fcf97;box-shadow:0 2px 2.5px rgba(0,0,0,0.22);"></div><div style="position:absolute;left:504px;top:0;width:16px;height:39px;border-radius:8px;background:#6fcf97;box-shadow:0 2px 2.5px rgba(0,0,0,0.22);"></div><div style="position:absolute;left:528px;top:0;width:16px;height:39px;border-radius:8px;background:#6fcf97;box-shadow:0 2px 2.5px rgba(0,0,0,0.22);"></div><div style="position:absolute;left:552px;top:0;width:16px;height:39px;border-radius:8px;background:#6fcf97;box-shadow:0 2px 2.5px rgba(0,0,0,0.22);"></div><div style="position:absolute;left:576px;top:0;width:16px;height:39px;border-radius:8px;background:#6fcf97;box-shadow:0 2px 2.5px rgba(0,0,0,0.22);"></div><div style="position:absolute;left:600px;top:0;width:16px;height:39px;border-radius:8px;background:#6fcf97;box-shadow:0 2px 2.5px rgba(0,0,0,0.22);"></div><div style="position:absolute;left:624px;top:0;width:16px;height:39px;border-radius:8px;background:#6fcf97;box-shadow:0 2px 2.5px rgba(0,0,0,0.22);"></div><div style="position:absolute;left:648px;top:0;width:16px;height:39px;border-radius:8px;background:#6fcf97;box-shadow:0 2px 2.5px rgba(0,0,0,0.22);"></div><div style="position:absolute;left:672px;top:0;width:16px;height:39px;border-radius:8px;background:#6fcf97;box-shadow:0 2px 2.5px rgba(0,0,0,0.22);"></div><div style="position:absolute;left:696px;top:0;width:16px;height:39px;border-radius:8px;background:#6fcf97;box-shadow:0 2px 2.5px rgba(0,0,0,0.22);"></div></div>
<div style="position:absolute;left:2713px;top:1284px;width:60px;height:60px;background:#6fcf97;border-radius:50%;"></div>
<div class="t" style="left:2794.5px;top:1297.6px;font-size:28px;font-weight:400;color:#1c1c1e;letter-spacing:0px;">Online</div>
<div class="t" style="left:3073.5px;top:1297.6px;font-size:28px;font-weight:400;color:#6e6e73;letter-spacing:0.7px;">Detail &gt;</div>
<div style="position:absolute;left:612px;top:1361px;width:2684px;height:2px;background:#e0e0e0;"></div>
<div class="t" style="left:644.0px;top:1393.6px;font-size:28px;font-weight:400;color:#1c1c1e;letter-spacing:0px;">bag-era-infra</div>
<div class="t" style="left:926.0px;top:1393.6px;font-size:28px;font-weight:400;color:#1c1c1e;letter-spacing:0px;">Zbix</div>
<div class="t" style="right:1719.5px;top:1393.6px;font-size:28px;font-weight:400;color:#1c1c1e;letter-spacing:0px;">100.00%</div>
<div style="position:absolute;left:1729px;top:1377px;width:720px;height:42px;"><div style="position:absolute;left:0px;top:0;width:16px;height:39px;border-radius:8px;background:#6fcf97;box-shadow:0 2px 2.5px rgba(0,0,0,0.22);"></div><div style="position:absolute;left:24px;top:0;width:16px;height:39px;border-radius:8px;background:#6fcf97;box-shadow:0 2px 2.5px rgba(0,0,0,0.22);"></div><div style="position:absolute;left:48px;top:0;width:16px;height:39px;border-radius:8px;background:#6fcf97;box-shadow:0 2px 2.5px rgba(0,0,0,0.22);"></div><div style="position:absolute;left:72px;top:0;width:16px;height:39px;border-radius:8px;background:#6fcf97;box-shadow:0 2px 2.5px rgba(0,0,0,0.22);"></div><div style="position:absolute;left:96px;top:0;width:16px;height:39px;border-radius:8px;background:#6fcf97;box-shadow:0 2px 2.5px rgba(0,0,0,0.22);"></div><div style="position:absolute;left:120px;top:0;width:16px;height:39px;border-radius:8px;background:#6fcf97;box-shadow:0 2px 2.5px rgba(0,0,0,0.22);"></div><div style="position:absolute;left:144px;top:0;width:16px;height:39px;border-radius:8px;background:#6fcf97;box-shadow:0 2px 2.5px rgba(0,0,0,0.22);"></div><div style="position:absolute;left:168px;top:0;width:16px;height:39px;border-radius:8px;background:#6fcf97;box-shadow:0 2px 2.5px rgba(0,0,0,0.22);"></div><div style="position:absolute;left:192px;top:0;width:16px;height:39px;border-radius:8px;background:#6fcf97;box-shadow:0 2px 2.5px rgba(0,0,0,0.22);"></div><div style="position:absolute;left:216px;top:0;width:16px;height:39px;border-radius:8px;background:#6fcf97;box-shadow:0 2px 2.5px rgba(0,0,0,0.22);"></div><div style="position:absolute;left:240px;top:0;width:16px;height:39px;border-radius:8px;background:#6fcf97;box-shadow:0 2px 2.5px rgba(0,0,0,0.22);"></div><div style="position:absolute;left:264px;top:0;width:16px;height:39px;border-radius:8px;background:#6fcf97;box-shadow:0 2px 2.5px rgba(0,0,0,0.22);"></div><div style="position:absolute;left:288px;top:0;width:16px;height:39px;border-radius:8px;background:#6fcf97;box-shadow:0 2px 2.5px rgba(0,0,0,0.22);"></div><div style="position:absolute;left:312px;top:0;width:16px;height:39px;border-radius:8px;background:#6fcf97;box-shadow:0 2px 2.5px rgba(0,0,0,0.22);"></div><div style="position:absolute;left:336px;top:0;width:16px;height:39px;border-radius:8px;background:#6fcf97;box-shadow:0 2px 2.5px rgba(0,0,0,0.22);"></div><div style="position:absolute;left:360px;top:0;width:16px;height:39px;border-radius:8px;background:#6fcf97;box-shadow:0 2px 2.5px rgba(0,0,0,0.22);"></div><div style="position:absolute;left:384px;top:0;width:16px;height:39px;border-radius:8px;background:#6fcf97;box-shadow:0 2px 2.5px rgba(0,0,0,0.22);"></div><div style="position:absolute;left:408px;top:0;width:16px;height:39px;border-radius:8px;background:#6fcf97;box-shadow:0 2px 2.5px rgba(0,0,0,0.22);"></div><div style="position:absolute;left:432px;top:0;width:16px;height:39px;border-radius:8px;background:#6fcf97;box-shadow:0 2px 2.5px rgba(0,0,0,0.22);"></div><div style="position:absolute;left:456px;top:0;width:16px;height:39px;border-radius:8px;background:#6fcf97;box-shadow:0 2px 2.5px rgba(0,0,0,0.22);"></div><div style="position:absolute;left:480px;top:0;width:16px;height:39px;border-radius:8px;background:#6fcf97;box-shadow:0 2px 2.5px rgba(0,0,0,0.22);"></div><div style="position:absolute;left:504px;top:0;width:16px;height:39px;border-radius:8px;background:#6fcf97;box-shadow:0 2px 2.5px rgba(0,0,0,0.22);"></div><div style="position:absolute;left:528px;top:0;width:16px;height:39px;border-radius:8px;background:#6fcf97;box-shadow:0 2px 2.5px rgba(0,0,0,0.22);"></div><div style="position:absolute;left:552px;top:0;width:16px;height:39px;border-radius:8px;background:#6fcf97;box-shadow:0 2px 2.5px rgba(0,0,0,0.22);"></div><div style="position:absolute;left:576px;top:0;width:16px;height:39px;border-radius:8px;background:#6fcf97;box-shadow:0 2px 2.5px rgba(0,0,0,0.22);"></div><div style="position:absolute;left:600px;top:0;width:16px;height:39px;border-radius:8px;background:#6fcf97;box-shadow:0 2px 2.5px rgba(0,0,0,0.22);"></div><div style="position:absolute;left:624px;top:0;width:16px;height:39px;border-radius:8px;background:#6fcf97;box-shadow:0 2px 2.5px rgba(0,0,0,0.22);"></div><div style="position:absolute;left:648px;top:0;width:16px;height:39px;border-radius:8px;background:#6fcf97;box-shadow:0 2px 2.5px rgba(0,0,0,0.22);"></div><div style="position:absolute;left:672px;top:0;width:16px;height:39px;border-radius:8px;background:#6fcf97;box-shadow:0 2px 2.5px rgba(0,0,0,0.22);"></div><div style="position:absolute;left:696px;top:0;width:16px;height:39px;border-radius:8px;background:#6fcf97;box-shadow:0 2px 2.5px rgba(0,0,0,0.22);"></div></div>
<div style="position:absolute;left:2713px;top:1380px;width:60px;height:60px;background:#6fcf97;border-radius:50%;"></div>
<div class="t" style="left:2794.5px;top:1393.6px;font-size:28px;font-weight:400;color:#1c1c1e;letter-spacing:0px;">Online</div>
<div class="t" style="left:3073.5px;top:1393.6px;font-size:28px;font-weight:400;color:#6e6e73;letter-spacing:0.7px;">Detail &gt;</div>
<div style="position:absolute;left:612px;top:1457px;width:2684px;height:2px;background:#e0e0e0;"></div>
<div class="t" style="left:644.0px;top:1489.6px;font-size:28px;font-weight:400;color:#1c1c1e;letter-spacing:0px;">BAG·Tower</div>
<div class="t" style="left:926.0px;top:1489.6px;font-size:28px;font-weight:400;color:#1c1c1e;letter-spacing:0px;">BAG·Tower invoice</div>
<div class="t" style="right:1719.5px;top:1489.6px;font-size:28px;font-weight:400;color:#1c1c1e;letter-spacing:0px;">100.00%</div>
<div style="position:absolute;left:1729px;top:1473px;width:720px;height:42px;"><div style="position:absolute;left:0px;top:0;width:16px;height:39px;border-radius:8px;background:#f58463;box-shadow:0 2px 2.5px rgba(0,0,0,0.22);"></div><div style="position:absolute;left:24px;top:0;width:16px;height:39px;border-radius:8px;background:#f58463;box-shadow:0 2px 2.5px rgba(0,0,0,0.22);"></div><div style="position:absolute;left:48px;top:0;width:16px;height:39px;border-radius:8px;background:#f58463;box-shadow:0 2px 2.5px rgba(0,0,0,0.22);"></div><div style="position:absolute;left:72px;top:0;width:16px;height:39px;border-radius:8px;background:#6fcf97;box-shadow:0 2px 2.5px rgba(0,0,0,0.22);"></div><div style="position:absolute;left:96px;top:0;width:16px;height:39px;border-radius:8px;background:#6fcf97;box-shadow:0 2px 2.5px rgba(0,0,0,0.22);"></div><div style="position:absolute;left:120px;top:0;width:16px;height:39px;border-radius:8px;background:#f58463;box-shadow:0 2px 2.5px rgba(0,0,0,0.22);"></div><div style="position:absolute;left:144px;top:0;width:16px;height:39px;border-radius:8px;background:#f58463;box-shadow:0 2px 2.5px rgba(0,0,0,0.22);"></div><div style="position:absolute;left:168px;top:0;width:16px;height:39px;border-radius:8px;background:#6fcf97;box-shadow:0 2px 2.5px rgba(0,0,0,0.22);"></div><div style="position:absolute;left:192px;top:0;width:16px;height:39px;border-radius:8px;background:#f58463;box-shadow:0 2px 2.5px rgba(0,0,0,0.22);"></div><div style="position:absolute;left:216px;top:0;width:16px;height:39px;border-radius:8px;background:#f58463;box-shadow:0 2px 2.5px rgba(0,0,0,0.22);"></div><div style="position:absolute;left:240px;top:0;width:16px;height:39px;border-radius:8px;background:#6fcf97;box-shadow:0 2px 2.5px rgba(0,0,0,0.22);"></div><div style="position:absolute;left:264px;top:0;width:16px;height:39px;border-radius:8px;background:#6fcf97;box-shadow:0 2px 2.5px rgba(0,0,0,0.22);"></div><div style="position:absolute;left:288px;top:0;width:16px;height:39px;border-radius:8px;background:#6fcf97;box-shadow:0 2px 2.5px rgba(0,0,0,0.22);"></div><div style="position:absolute;left:312px;top:0;width:16px;height:39px;border-radius:8px;background:#6fcf97;box-shadow:0 2px 2.5px rgba(0,0,0,0.22);"></div><div style="position:absolute;left:336px;top:0;width:16px;height:39px;border-radius:8px;background:#6fcf97;box-shadow:0 2px 2.5px rgba(0,0,0,0.22);"></div><div style="position:absolute;left:360px;top:0;width:16px;height:39px;border-radius:8px;background:#6fcf97;box-shadow:0 2px 2.5px rgba(0,0,0,0.22);"></div><div style="position:absolute;left:384px;top:0;width:16px;height:39px;border-radius:8px;background:#6fcf97;box-shadow:0 2px 2.5px rgba(0,0,0,0.22);"></div><div style="position:absolute;left:408px;top:0;width:16px;height:39px;border-radius:8px;background:#6fcf97;box-shadow:0 2px 2.5px rgba(0,0,0,0.22);"></div><div style="position:absolute;left:432px;top:0;width:16px;height:39px;border-radius:8px;background:#6fcf97;box-shadow:0 2px 2.5px rgba(0,0,0,0.22);"></div><div style="position:absolute;left:456px;top:0;width:16px;height:39px;border-radius:8px;background:#6fcf97;box-shadow:0 2px 2.5px rgba(0,0,0,0.22);"></div><div style="position:absolute;left:480px;top:0;width:16px;height:39px;border-radius:8px;background:#6fcf97;box-shadow:0 2px 2.5px rgba(0,0,0,0.22);"></div><div style="position:absolute;left:504px;top:0;width:16px;height:39px;border-radius:8px;background:#6fcf97;box-shadow:0 2px 2.5px rgba(0,0,0,0.22);"></div><div style="position:absolute;left:528px;top:0;width:16px;height:39px;border-radius:8px;background:#6fcf97;box-shadow:0 2px 2.5px rgba(0,0,0,0.22);"></div><div style="position:absolute;left:552px;top:0;width:16px;height:39px;border-radius:8px;background:#6fcf97;box-shadow:0 2px 2.5px rgba(0,0,0,0.22);"></div><div style="position:absolute;left:576px;top:0;width:16px;height:39px;border-radius:8px;background:#6fcf97;box-shadow:0 2px 2.5px rgba(0,0,0,0.22);"></div><div style="position:absolute;left:600px;top:0;width:16px;height:39px;border-radius:8px;background:#6fcf97;box-shadow:0 2px 2.5px rgba(0,0,0,0.22);"></div><div style="position:absolute;left:624px;top:0;width:16px;height:39px;border-radius:8px;background:#6fcf97;box-shadow:0 2px 2.5px rgba(0,0,0,0.22);"></div><div style="position:absolute;left:648px;top:0;width:16px;height:39px;border-radius:8px;background:#6fcf97;box-shadow:0 2px 2.5px rgba(0,0,0,0.22);"></div><div style="position:absolute;left:672px;top:0;width:16px;height:39px;border-radius:8px;background:#6fcf97;box-shadow:0 2px 2.5px rgba(0,0,0,0.22);"></div><div style="position:absolute;left:696px;top:0;width:16px;height:39px;border-radius:8px;background:#6fcf97;box-shadow:0 2px 2.5px rgba(0,0,0,0.22);"></div></div>
<div style="position:absolute;left:2713px;top:1476px;width:60px;height:60px;background:#6fcf97;border-radius:50%;"></div>
<div class="t" style="left:2794.5px;top:1489.6px;font-size:28px;font-weight:400;color:#1c1c1e;letter-spacing:0px;">Online</div>
<div class="t" style="left:3073.5px;top:1489.6px;font-size:28px;font-weight:400;color:#6e6e73;letter-spacing:0.7px;">Detail &gt;</div>
<div style="position:absolute;left:612px;top:1553px;width:2684px;height:2px;background:#e0e0e0;"></div>
<div class="t" style="left:644.0px;top:1585.6px;font-size:28px;font-weight:400;color:#1c1c1e;letter-spacing:0px;">dynapark</div>
<div class="t" style="left:926.0px;top:1585.6px;font-size:28px;font-weight:400;color:#1c1c1e;letter-spacing:0px;">ec2_typo</div>
<div class="t" style="right:1719.5px;top:1585.6px;font-size:28px;font-weight:400;color:#1c1c1e;letter-spacing:0px;">99.90%</div>
<div style="position:absolute;left:1729px;top:1569px;width:720px;height:42px;"><div style="position:absolute;left:0px;top:0;width:16px;height:39px;border-radius:8px;background:#6fcf97;box-shadow:0 2px 2.5px rgba(0,0,0,0.22);"></div><div style="position:absolute;left:24px;top:0;width:16px;height:39px;border-radius:8px;background:#6fcf97;box-shadow:0 2px 2.5px rgba(0,0,0,0.22);"></div><div style="position:absolute;left:48px;top:0;width:16px;height:39px;border-radius:8px;background:#6fcf97;box-shadow:0 2px 2.5px rgba(0,0,0,0.22);"></div><div style="position:absolute;left:72px;top:0;width:16px;height:39px;border-radius:8px;background:#6fcf97;box-shadow:0 2px 2.5px rgba(0,0,0,0.22);"></div><div style="position:absolute;left:96px;top:0;width:16px;height:39px;border-radius:8px;background:#6fcf97;box-shadow:0 2px 2.5px rgba(0,0,0,0.22);"></div><div style="position:absolute;left:120px;top:0;width:16px;height:39px;border-radius:8px;background:#6fcf97;box-shadow:0 2px 2.5px rgba(0,0,0,0.22);"></div><div style="position:absolute;left:144px;top:0;width:16px;height:39px;border-radius:8px;background:#e60808;box-shadow:0 2px 2.5px rgba(0,0,0,0.22);"></div><div style="position:absolute;left:168px;top:0;width:16px;height:39px;border-radius:8px;background:#e60808;box-shadow:0 2px 2.5px rgba(0,0,0,0.22);"></div><div style="position:absolute;left:192px;top:0;width:16px;height:39px;border-radius:8px;background:#e60808;box-shadow:0 2px 2.5px rgba(0,0,0,0.22);"></div><div style="position:absolute;left:216px;top:0;width:16px;height:39px;border-radius:8px;background:#e60808;box-shadow:0 2px 2.5px rgba(0,0,0,0.22);"></div><div style="position:absolute;left:240px;top:0;width:16px;height:39px;border-radius:8px;background:#6fcf97;box-shadow:0 2px 2.5px rgba(0,0,0,0.22);"></div><div style="position:absolute;left:264px;top:0;width:16px;height:39px;border-radius:8px;background:#6fcf97;box-shadow:0 2px 2.5px rgba(0,0,0,0.22);"></div><div style="position:absolute;left:288px;top:0;width:16px;height:39px;border-radius:8px;background:#6fcf97;box-shadow:0 2px 2.5px rgba(0,0,0,0.22);"></div><div style="position:absolute;left:312px;top:0;width:16px;height:39px;border-radius:8px;background:#6fcf97;box-shadow:0 2px 2.5px rgba(0,0,0,0.22);"></div><div style="position:absolute;left:336px;top:0;width:16px;height:39px;border-radius:8px;background:#6fcf97;box-shadow:0 2px 2.5px rgba(0,0,0,0.22);"></div><div style="position:absolute;left:360px;top:0;width:16px;height:39px;border-radius:8px;background:#6fcf97;box-shadow:0 2px 2.5px rgba(0,0,0,0.22);"></div><div style="position:absolute;left:384px;top:0;width:16px;height:39px;border-radius:8px;background:#6fcf97;box-shadow:0 2px 2.5px rgba(0,0,0,0.22);"></div><div style="position:absolute;left:408px;top:0;width:16px;height:39px;border-radius:8px;background:#6fcf97;box-shadow:0 2px 2.5px rgba(0,0,0,0.22);"></div><div style="position:absolute;left:432px;top:0;width:16px;height:39px;border-radius:8px;background:#6fcf97;box-shadow:0 2px 2.5px rgba(0,0,0,0.22);"></div><div style="position:absolute;left:456px;top:0;width:16px;height:39px;border-radius:8px;background:#6fcf97;box-shadow:0 2px 2.5px rgba(0,0,0,0.22);"></div><div style="position:absolute;left:480px;top:0;width:16px;height:39px;border-radius:8px;background:#6fcf97;box-shadow:0 2px 2.5px rgba(0,0,0,0.22);"></div><div style="position:absolute;left:504px;top:0;width:16px;height:39px;border-radius:8px;background:#6fcf97;box-shadow:0 2px 2.5px rgba(0,0,0,0.22);"></div><div style="position:absolute;left:528px;top:0;width:16px;height:39px;border-radius:8px;background:#6fcf97;box-shadow:0 2px 2.5px rgba(0,0,0,0.22);"></div><div style="position:absolute;left:552px;top:0;width:16px;height:39px;border-radius:8px;background:#e60808;box-shadow:0 2px 2.5px rgba(0,0,0,0.22);"></div><div style="position:absolute;left:576px;top:0;width:16px;height:39px;border-radius:8px;background:#6fcf97;box-shadow:0 2px 2.5px rgba(0,0,0,0.22);"></div><div style="position:absolute;left:600px;top:0;width:16px;height:39px;border-radius:8px;background:#6fcf97;box-shadow:0 2px 2.5px rgba(0,0,0,0.22);"></div><div style="position:absolute;left:624px;top:0;width:16px;height:39px;border-radius:8px;background:#6fcf97;box-shadow:0 2px 2.5px rgba(0,0,0,0.22);"></div><div style="position:absolute;left:648px;top:0;width:16px;height:39px;border-radius:8px;background:#6fcf97;box-shadow:0 2px 2.5px rgba(0,0,0,0.22);"></div><div style="position:absolute;left:672px;top:0;width:16px;height:39px;border-radius:8px;background:#6fcf97;box-shadow:0 2px 2.5px rgba(0,0,0,0.22);"></div><div style="position:absolute;left:696px;top:0;width:16px;height:39px;border-radius:8px;background:#6fcf97;box-shadow:0 2px 2.5px rgba(0,0,0,0.22);"></div></div>
<div style="position:absolute;left:2713px;top:1572px;width:60px;height:60px;background:#6fcf97;border-radius:50%;"></div>
<div class="t" style="left:2794.5px;top:1585.6px;font-size:28px;font-weight:400;color:#1c1c1e;letter-spacing:0px;">Online</div>
<div class="t" style="left:3073.5px;top:1585.6px;font-size:28px;font-weight:400;color:#6e6e73;letter-spacing:0.7px;">Detail &gt;</div>
<div style="position:absolute;left:612px;top:1649px;width:2684px;height:2px;background:#e0e0e0;"></div>
<div class="t" style="left:644.0px;top:1681.6px;font-size:28px;font-weight:400;color:#1c1c1e;letter-spacing:0px;">flowit</div>
<div class="t" style="left:926.0px;top:1681.6px;font-size:28px;font-weight:400;color:#1c1c1e;letter-spacing:0px;">AWS FL</div>
<div class="t" style="right:1719.5px;top:1681.6px;font-size:28px;font-weight:400;color:#1c1c1e;letter-spacing:0px;">97.00%</div>
<div style="position:absolute;left:1729px;top:1665px;width:720px;height:42px;"><div style="position:absolute;left:0px;top:0;width:16px;height:39px;border-radius:8px;background:#6fcf97;box-shadow:0 2px 2.5px rgba(0,0,0,0.22);"></div><div style="position:absolute;left:24px;top:0;width:16px;height:39px;border-radius:8px;background:#6fcf97;box-shadow:0 2px 2.5px rgba(0,0,0,0.22);"></div><div style="position:absolute;left:48px;top:0;width:16px;height:39px;border-radius:8px;background:#6fcf97;box-shadow:0 2px 2.5px rgba(0,0,0,0.22);"></div><div style="position:absolute;left:72px;top:0;width:16px;height:39px;border-radius:8px;background:#6fcf97;box-shadow:0 2px 2.5px rgba(0,0,0,0.22);"></div><div style="position:absolute;left:96px;top:0;width:16px;height:39px;border-radius:8px;background:#6fcf97;box-shadow:0 2px 2.5px rgba(0,0,0,0.22);"></div><div style="position:absolute;left:120px;top:0;width:16px;height:39px;border-radius:8px;background:#6fcf97;box-shadow:0 2px 2.5px rgba(0,0,0,0.22);"></div><div style="position:absolute;left:144px;top:0;width:16px;height:39px;border-radius:8px;background:#6fcf97;box-shadow:0 2px 2.5px rgba(0,0,0,0.22);"></div><div style="position:absolute;left:168px;top:0;width:16px;height:39px;border-radius:8px;background:#6fcf97;box-shadow:0 2px 2.5px rgba(0,0,0,0.22);"></div><div style="position:absolute;left:192px;top:0;width:16px;height:39px;border-radius:8px;background:#6fcf97;box-shadow:0 2px 2.5px rgba(0,0,0,0.22);"></div><div style="position:absolute;left:216px;top:0;width:16px;height:39px;border-radius:8px;background:#6fcf97;box-shadow:0 2px 2.5px rgba(0,0,0,0.22);"></div><div style="position:absolute;left:240px;top:0;width:16px;height:39px;border-radius:8px;background:#6fcf97;box-shadow:0 2px 2.5px rgba(0,0,0,0.22);"></div><div style="position:absolute;left:264px;top:0;width:16px;height:39px;border-radius:8px;background:#6fcf97;box-shadow:0 2px 2.5px rgba(0,0,0,0.22);"></div><div style="position:absolute;left:288px;top:0;width:16px;height:39px;border-radius:8px;background:#6fcf97;box-shadow:0 2px 2.5px rgba(0,0,0,0.22);"></div><div style="position:absolute;left:312px;top:0;width:16px;height:39px;border-radius:8px;background:#6fcf97;box-shadow:0 2px 2.5px rgba(0,0,0,0.22);"></div><div style="position:absolute;left:336px;top:0;width:16px;height:39px;border-radius:8px;background:#6fcf97;box-shadow:0 2px 2.5px rgba(0,0,0,0.22);"></div><div style="position:absolute;left:360px;top:0;width:16px;height:39px;border-radius:8px;background:#6fcf97;box-shadow:0 2px 2.5px rgba(0,0,0,0.22);"></div><div style="position:absolute;left:384px;top:0;width:16px;height:39px;border-radius:8px;background:#6fcf97;box-shadow:0 2px 2.5px rgba(0,0,0,0.22);"></div><div style="position:absolute;left:408px;top:0;width:16px;height:39px;border-radius:8px;background:#6fcf97;box-shadow:0 2px 2.5px rgba(0,0,0,0.22);"></div><div style="position:absolute;left:432px;top:0;width:16px;height:39px;border-radius:8px;background:#6fcf97;box-shadow:0 2px 2.5px rgba(0,0,0,0.22);"></div><div style="position:absolute;left:456px;top:0;width:16px;height:39px;border-radius:8px;background:#6fcf97;box-shadow:0 2px 2.5px rgba(0,0,0,0.22);"></div><div style="position:absolute;left:480px;top:0;width:16px;height:39px;border-radius:8px;background:#6fcf97;box-shadow:0 2px 2.5px rgba(0,0,0,0.22);"></div><div style="position:absolute;left:504px;top:0;width:16px;height:39px;border-radius:8px;background:#6fcf97;box-shadow:0 2px 2.5px rgba(0,0,0,0.22);"></div><div style="position:absolute;left:528px;top:0;width:16px;height:39px;border-radius:8px;background:#6fcf97;box-shadow:0 2px 2.5px rgba(0,0,0,0.22);"></div><div style="position:absolute;left:552px;top:0;width:16px;height:39px;border-radius:8px;background:#6fcf97;box-shadow:0 2px 2.5px rgba(0,0,0,0.22);"></div><div style="position:absolute;left:576px;top:0;width:16px;height:39px;border-radius:8px;background:#e60808;box-shadow:0 2px 2.5px rgba(0,0,0,0.22);"></div><div style="position:absolute;left:600px;top:0;width:16px;height:39px;border-radius:8px;background:#e60808;box-shadow:0 2px 2.5px rgba(0,0,0,0.22);"></div><div style="position:absolute;left:624px;top:0;width:16px;height:39px;border-radius:8px;background:#6fcf97;box-shadow:0 2px 2.5px rgba(0,0,0,0.22);"></div><div style="position:absolute;left:648px;top:0;width:16px;height:39px;border-radius:8px;background:#6fcf97;box-shadow:0 2px 2.5px rgba(0,0,0,0.22);"></div><div style="position:absolute;left:672px;top:0;width:16px;height:39px;border-radius:8px;background:#6fcf97;box-shadow:0 2px 2.5px rgba(0,0,0,0.22);"></div><div style="position:absolute;left:696px;top:0;width:16px;height:39px;border-radius:8px;background:#6fcf97;box-shadow:0 2px 2.5px rgba(0,0,0,0.22);"></div></div>
<div style="position:absolute;left:2713px;top:1668px;width:60px;height:60px;background:#6fcf97;border-radius:50%;"></div>
<div class="t" style="left:2794.5px;top:1681.6px;font-size:28px;font-weight:400;color:#1c1c1e;letter-spacing:0px;">Online</div>
<div class="t" style="left:3073.5px;top:1681.6px;font-size:28px;font-weight:400;color:#6e6e73;letter-spacing:0.7px;">Detail &gt;</div>
<div style="position:absolute;left:612px;top:1745px;width:2684px;height:2px;background:#e0e0e0;"></div>
<div class="t" style="left:644.0px;top:1777.6px;font-size:28px;font-weight:400;color:#1c1c1e;letter-spacing:0px;">sinao</div>
<div class="t" style="left:926.0px;top:1777.6px;font-size:28px;font-weight:400;color:#1c1c1e;letter-spacing:0px;">invoice-flow</div>
<div class="t" style="right:1719.5px;top:1777.6px;font-size:28px;font-weight:400;color:#1c1c1e;letter-spacing:0px;">99.98%</div>
<div style="position:absolute;left:1729px;top:1761px;width:720px;height:42px;"><div style="position:absolute;left:0px;top:0;width:16px;height:39px;border-radius:8px;background:#6fcf97;box-shadow:0 2px 2.5px rgba(0,0,0,0.22);"></div><div style="position:absolute;left:24px;top:0;width:16px;height:39px;border-radius:8px;background:#6fcf97;box-shadow:0 2px 2.5px rgba(0,0,0,0.22);"></div><div style="position:absolute;left:48px;top:0;width:16px;height:39px;border-radius:8px;background:#6fcf97;box-shadow:0 2px 2.5px rgba(0,0,0,0.22);"></div><div style="position:absolute;left:72px;top:0;width:16px;height:39px;border-radius:8px;background:#6fcf97;box-shadow:0 2px 2.5px rgba(0,0,0,0.22);"></div><div style="position:absolute;left:96px;top:0;width:16px;height:39px;border-radius:8px;background:#6fcf97;box-shadow:0 2px 2.5px rgba(0,0,0,0.22);"></div><div style="position:absolute;left:120px;top:0;width:16px;height:39px;border-radius:8px;background:#6fcf97;box-shadow:0 2px 2.5px rgba(0,0,0,0.22);"></div><div style="position:absolute;left:144px;top:0;width:16px;height:39px;border-radius:8px;background:#6fcf97;box-shadow:0 2px 2.5px rgba(0,0,0,0.22);"></div><div style="position:absolute;left:168px;top:0;width:16px;height:39px;border-radius:8px;background:#6fcf97;box-shadow:0 2px 2.5px rgba(0,0,0,0.22);"></div><div style="position:absolute;left:192px;top:0;width:16px;height:39px;border-radius:8px;background:#6fcf97;box-shadow:0 2px 2.5px rgba(0,0,0,0.22);"></div><div style="position:absolute;left:216px;top:0;width:16px;height:39px;border-radius:8px;background:#6fcf97;box-shadow:0 2px 2.5px rgba(0,0,0,0.22);"></div><div style="position:absolute;left:240px;top:0;width:16px;height:39px;border-radius:8px;background:#6fcf97;box-shadow:0 2px 2.5px rgba(0,0,0,0.22);"></div><div style="position:absolute;left:264px;top:0;width:16px;height:39px;border-radius:8px;background:#6fcf97;box-shadow:0 2px 2.5px rgba(0,0,0,0.22);"></div><div style="position:absolute;left:288px;top:0;width:16px;height:39px;border-radius:8px;background:#6fcf97;box-shadow:0 2px 2.5px rgba(0,0,0,0.22);"></div><div style="position:absolute;left:312px;top:0;width:16px;height:39px;border-radius:8px;background:#6fcf97;box-shadow:0 2px 2.5px rgba(0,0,0,0.22);"></div><div style="position:absolute;left:336px;top:0;width:16px;height:39px;border-radius:8px;background:#6fcf97;box-shadow:0 2px 2.5px rgba(0,0,0,0.22);"></div><div style="position:absolute;left:360px;top:0;width:16px;height:39px;border-radius:8px;background:#6fcf97;box-shadow:0 2px 2.5px rgba(0,0,0,0.22);"></div><div style="position:absolute;left:384px;top:0;width:16px;height:39px;border-radius:8px;background:#6fcf97;box-shadow:0 2px 2.5px rgba(0,0,0,0.22);"></div><div style="position:absolute;left:408px;top:0;width:16px;height:39px;border-radius:8px;background:#6fcf97;box-shadow:0 2px 2.5px rgba(0,0,0,0.22);"></div><div style="position:absolute;left:432px;top:0;width:16px;height:39px;border-radius:8px;background:#6fcf97;box-shadow:0 2px 2.5px rgba(0,0,0,0.22);"></div><div style="position:absolute;left:456px;top:0;width:16px;height:39px;border-radius:8px;background:#6fcf97;box-shadow:0 2px 2.5px rgba(0,0,0,0.22);"></div><div style="position:absolute;left:480px;top:0;width:16px;height:39px;border-radius:8px;background:#6fcf97;box-shadow:0 2px 2.5px rgba(0,0,0,0.22);"></div><div style="position:absolute;left:504px;top:0;width:16px;height:39px;border-radius:8px;background:#6fcf97;box-shadow:0 2px 2.5px rgba(0,0,0,0.22);"></div><div style="position:absolute;left:528px;top:0;width:16px;height:39px;border-radius:8px;background:#6fcf97;box-shadow:0 2px 2.5px rgba(0,0,0,0.22);"></div><div style="position:absolute;left:552px;top:0;width:16px;height:39px;border-radius:8px;background:#6fcf97;box-shadow:0 2px 2.5px rgba(0,0,0,0.22);"></div><div style="position:absolute;left:576px;top:0;width:16px;height:39px;border-radius:8px;background:#e60808;box-shadow:0 2px 2.5px rgba(0,0,0,0.22);"></div><div style="position:absolute;left:600px;top:0;width:16px;height:39px;border-radius:8px;background:#6fcf97;box-shadow:0 2px 2.5px rgba(0,0,0,0.22);"></div><div style="position:absolute;left:624px;top:0;width:16px;height:39px;border-radius:8px;background:#6fcf97;box-shadow:0 2px 2.5px rgba(0,0,0,0.22);"></div><div style="position:absolute;left:648px;top:0;width:16px;height:39px;border-radius:8px;background:#6fcf97;box-shadow:0 2px 2.5px rgba(0,0,0,0.22);"></div><div style="position:absolute;left:672px;top:0;width:16px;height:39px;border-radius:8px;background:#6fcf97;box-shadow:0 2px 2.5px rgba(0,0,0,0.22);"></div><div style="position:absolute;left:696px;top:0;width:16px;height:39px;border-radius:8px;background:#6fcf97;box-shadow:0 2px 2.5px rgba(0,0,0,0.22);"></div></div>
<div style="position:absolute;left:2713px;top:1764px;width:60px;height:60px;background:#6fcf97;border-radius:50%;"></div>
<div class="t" style="left:2794.5px;top:1777.6px;font-size:28px;font-weight:400;color:#1c1c1e;letter-spacing:0px;">Online</div>
<div class="t" style="left:3073.5px;top:1777.6px;font-size:28px;font-weight:400;color:#6e6e73;letter-spacing:0.7px;">Detail &gt;</div>
<div style="position:absolute;left:612px;top:1841px;width:2684px;height:2px;background:#e0e0e0;"></div>
<div style="position:absolute;left:1729px;top:1857px;width:720px;height:42px;"><div style="position:absolute;left:0px;top:0;width:16px;height:39px;border-radius:8px;background:#6fcf97;box-shadow:0 2px 2.5px rgba(0,0,0,0.22);"></div><div style="position:absolute;left:24px;top:0;width:16px;height:39px;border-radius:8px;background:#6fcf97;box-shadow:0 2px 2.5px rgba(0,0,0,0.22);"></div><div style="position:absolute;left:48px;top:0;width:16px;height:39px;border-radius:8px;background:#6fcf97;box-shadow:0 2px 2.5px rgba(0,0,0,0.22);"></div><div style="position:absolute;left:72px;top:0;width:16px;height:39px;border-radius:8px;background:#6fcf97;box-shadow:0 2px 2.5px rgba(0,0,0,0.22);"></div><div style="position:absolute;left:96px;top:0;width:16px;height:39px;border-radius:8px;background:#6fcf97;box-shadow:0 2px 2.5px rgba(0,0,0,0.22);"></div><div style="position:absolute;left:120px;top:0;width:16px;height:39px;border-radius:8px;background:#6fcf97;box-shadow:0 2px 2.5px rgba(0,0,0,0.22);"></div><div style="position:absolute;left:144px;top:0;width:16px;height:39px;border-radius:8px;background:#6fcf97;box-shadow:0 2px 2.5px rgba(0,0,0,0.22);"></div><div style="position:absolute;left:168px;top:0;width:16px;height:39px;border-radius:8px;background:#6fcf97;box-shadow:0 2px 2.5px rgba(0,0,0,0.22);"></div><div style="position:absolute;left:192px;top:0;width:16px;height:39px;border-radius:8px;background:#6fcf97;box-shadow:0 2px 2.5px rgba(0,0,0,0.22);"></div><div style="position:absolute;left:216px;top:0;width:16px;height:39px;border-radius:8px;background:#6fcf97;box-shadow:0 2px 2.5px rgba(0,0,0,0.22);"></div><div style="position:absolute;left:240px;top:0;width:16px;height:39px;border-radius:8px;background:#6fcf97;box-shadow:0 2px 2.5px rgba(0,0,0,0.22);"></div><div style="position:absolute;left:264px;top:0;width:16px;height:39px;border-radius:8px;background:#6fcf97;box-shadow:0 2px 2.5px rgba(0,0,0,0.22);"></div><div style="position:absolute;left:288px;top:0;width:16px;height:39px;border-radius:8px;background:#6fcf97;box-shadow:0 2px 2.5px rgba(0,0,0,0.22);"></div><div style="position:absolute;left:312px;top:0;width:16px;height:39px;border-radius:8px;background:#6fcf97;box-shadow:0 2px 2.5px rgba(0,0,0,0.22);"></div><div style="position:absolute;left:336px;top:0;width:16px;height:39px;border-radius:8px;background:#6fcf97;box-shadow:0 2px 2.5px rgba(0,0,0,0.22);"></div><div style="position:absolute;left:360px;top:0;width:16px;height:39px;border-radius:8px;background:#6fcf97;box-shadow:0 2px 2.5px rgba(0,0,0,0.22);"></div><div style="position:absolute;left:384px;top:0;width:16px;height:39px;border-radius:8px;background:#6fcf97;box-shadow:0 2px 2.5px rgba(0,0,0,0.22);"></div><div style="position:absolute;left:408px;top:0;width:16px;height:39px;border-radius:8px;background:#6fcf97;box-shadow:0 2px 2.5px rgba(0,0,0,0.22);"></div><div style="position:absolute;left:432px;top:0;width:16px;height:39px;border-radius:8px;background:#6fcf97;box-shadow:0 2px 2.5px rgba(0,0,0,0.22);"></div><div style="position:absolute;left:456px;top:0;width:16px;height:39px;border-radius:8px;background:#6fcf97;box-shadow:0 2px 2.5px rgba(0,0,0,0.22);"></div><div style="position:absolute;left:480px;top:0;width:16px;height:39px;border-radius:8px;background:#6fcf97;box-shadow:0 2px 2.5px rgba(0,0,0,0.22);"></div><div style="position:absolute;left:504px;top:0;width:16px;height:39px;border-radius:8px;background:#6fcf97;box-shadow:0 2px 2.5px rgba(0,0,0,0.22);"></div><div style="position:absolute;left:528px;top:0;width:16px;height:39px;border-radius:8px;background:#6fcf97;box-shadow:0 2px 2.5px rgba(0,0,0,0.22);"></div><div style="position:absolute;left:552px;top:0;width:16px;height:39px;border-radius:8px;background:#6fcf97;box-shadow:0 2px 2.5px rgba(0,0,0,0.22);"></div><div style="position:absolute;left:576px;top:0;width:16px;height:39px;border-radius:8px;background:#e60808;box-shadow:0 2px 2.5px rgba(0,0,0,0.22);"></div><div style="position:absolute;left:600px;top:0;width:16px;height:39px;border-radius:8px;background:#e60808;box-shadow:0 2px 2.5px rgba(0,0,0,0.22);"></div><div style="position:absolute;left:624px;top:0;width:16px;height:39px;border-radius:8px;background:#6fcf97;box-shadow:0 2px 2.5px rgba(0,0,0,0.22);"></div><div style="position:absolute;left:648px;top:0;width:16px;height:39px;border-radius:8px;background:#6fcf97;box-shadow:0 2px 2.5px rgba(0,0,0,0.22);"></div><div style="position:absolute;left:672px;top:0;width:16px;height:39px;border-radius:8px;background:#6fcf97;box-shadow:0 2px 2.5px rgba(0,0,0,0.22);"></div><div style="position:absolute;left:696px;top:0;width:16px;height:39px;border-radius:8px;background:#6fcf97;box-shadow:0 2px 2.5px rgba(0,0,0,0.22);"></div></div>
<div style="position:absolute;left:612px;top:1937px;width:2684px;height:2px;background:#e0e0e0;"></div>
<svg style="position:absolute;left:3192px;top:1714px" width="120" height="120" viewBox="0 0 120 120">
<circle cx="60" cy="60" r="60" fill="#c2185b"/>
<circle cx="60" cy="57.5" r="28" fill="#fff"/>
<path d="M49 82 L50 91 L76 81 Z" fill="#fff"/>
<path d="M57.7 70 H77 Q 76 77 67.3 77 Q 59 77 57.7 70 Z" fill="#c2185b"/>
</svg>
</body></html>
